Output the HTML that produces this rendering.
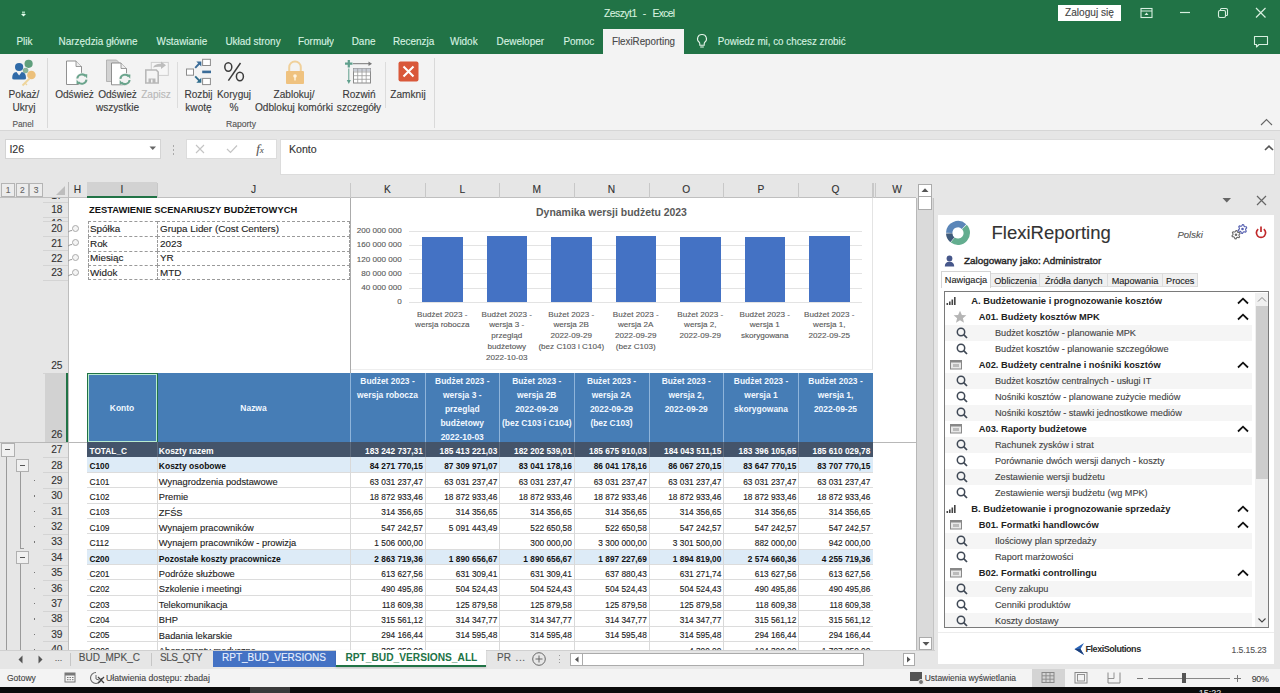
<!DOCTYPE html>
<html><head><meta charset="utf-8"><title>Excel</title>
<style>
html,body{margin:0;padding:0;}
body{width:1280px;height:693px;overflow:hidden;position:relative;background:#e6e6e6;font-family:"Liberation Sans",sans-serif;color:#222;}
div,svg{position:absolute;box-sizing:border-box;}
.t{white-space:pre;-webkit-text-stroke:0.12px currentColor;}
.b{-webkit-text-stroke:0;}
svg{overflow:visible;}
</style></head><body>

<div style="left:0px;top:0px;width:1280px;height:54px;background:#217346;"></div>
<svg style="left:20px;top:10px" width="8" height="8"><rect x="2" y="1.5" width="3" height="2" fill="#9fd3b3"/><path d="M1 4 L6 4 L3.5 6.5Z" fill="#e8fff0"/></svg>
<div class="t" style="left:603.9px;top:7.199999999999999px;height:14px;line-height:14px;font-size:10.3px;letter-spacing:-0.47px;color:#d6f0df;">Zeszyt1</div>
<div class="t" style="left:639.4px;top:7.199999999999999px;width:10px;height:14px;line-height:14px;text-align:center;font-size:10.3px;color:#d6f0df;">-</div>
<div class="t" style="left:652.5px;top:7.199999999999999px;height:14px;line-height:14px;font-size:10.3px;letter-spacing:-0.65px;color:#d6f0df;">Excel</div>
<div style="left:1058px;top:5px;width:63px;height:15.5px;background:#fff;"></div>
<div class="t" style="left:1054.5px;top:5.9px;width:70px;height:14px;line-height:14px;text-align:center;font-size:10.1px;color:#444;transform:scaleY(1.12);">Zaloguj się</div>
<svg style="left:1140px;top:7px" width="14" height="12"><rect x="1" y="1.5" width="11" height="9" fill="none" stroke="#d8efe0" stroke-width="1.1"/><line x1="1" y1="4" x2="12" y2="4" stroke="#d8efe0" stroke-width="1"/><path d="M6.5 5.5 L4.5 8 L8.5 8Z" fill="#d8efe0"/></svg>
<svg style="left:1179px;top:7px" width="14" height="12"><line x1="1" y1="5.5" x2="11" y2="5.5" stroke="#d8efe0" stroke-width="1.2"/></svg>
<svg style="left:1217px;top:7px" width="14" height="12"><rect x="1.5" y="3.5" width="7" height="7" rx="1.5" fill="none" stroke="#d8efe0" stroke-width="1.1"/><path d="M3.5 3.5 V2.5 Q3.5 1.5 4.5 1.5 H9 Q10.5 1.5 10.5 3 V7.5 Q10.5 8.5 9.5 8.5 H8.5" fill="none" stroke="#d8efe0" stroke-width="1.1"/></svg>
<svg style="left:1255px;top:7px" width="14" height="12"><path d="M1 1 L10.5 10.5 M10.5 1 L1 10.5" stroke="#d8efe0" stroke-width="1.2"/></svg>
<div class="t" style="left:16.4px;top:34.7px;height:14px;line-height:14px;font-size:9.95px;color:#d8f2e1;transform:scaleY(1.14);">Plik</div>
<div class="t" style="left:58.6px;top:34.7px;height:14px;line-height:14px;font-size:9.95px;color:#d8f2e1;transform:scaleY(1.14);">Narzędzia główne</div>
<div class="t" style="left:156.5px;top:34.7px;height:14px;line-height:14px;font-size:9.95px;color:#d8f2e1;transform:scaleY(1.14);">Wstawianie</div>
<div class="t" style="left:225.4px;top:34.7px;height:14px;line-height:14px;font-size:9.95px;color:#d8f2e1;transform:scaleY(1.14);">Układ strony</div>
<div class="t" style="left:298px;top:34.7px;height:14px;line-height:14px;font-size:9.95px;color:#d8f2e1;transform:scaleY(1.14);">Formuły</div>
<div class="t" style="left:351.7px;top:34.7px;height:14px;line-height:14px;font-size:9.95px;color:#d8f2e1;transform:scaleY(1.14);">Dane</div>
<div class="t" style="left:392.9px;top:34.7px;height:14px;line-height:14px;font-size:9.95px;color:#d8f2e1;transform:scaleY(1.14);">Recenzja</div>
<div class="t" style="left:450px;top:34.7px;height:14px;line-height:14px;font-size:9.95px;color:#d8f2e1;transform:scaleY(1.14);">Widok</div>
<div class="t" style="left:496.5px;top:34.7px;height:14px;line-height:14px;font-size:9.95px;color:#d8f2e1;transform:scaleY(1.14);">Deweloper</div>
<div class="t" style="left:563.4px;top:34.7px;height:14px;line-height:14px;font-size:9.95px;color:#d8f2e1;transform:scaleY(1.14);">Pomoc</div>
<div style="left:603px;top:28.5px;width:81px;height:25.5px;background:#f3f3f3;"></div>
<div class="t" style="left:598.5px;top:34.9px;width:90px;height:14px;line-height:14px;text-align:center;font-size:9.8px;color:#4a4a4a;transform:scaleY(1.14);">FlexiReporting</div>
<svg style="left:695px;top:33px" width="14" height="16"><path d="M7 1.5 A4.3 4.3 0 0 0 4.2 9.2 Q4.8 9.9 4.8 11 L4.8 12.3 L9.2 12.3 L9.2 11 Q9.2 9.9 9.8 9.2 A4.3 4.3 0 0 0 7 1.5Z" fill="none" stroke="#e6f4ea" stroke-width="1.1"/><line x1="5.2" y1="14" x2="8.8" y2="14" stroke="#e6f4ea" stroke-width="1.1"/></svg>
<div class="t" style="left:717.7px;top:34.7px;height:14px;line-height:14px;font-size:9.8px;color:#d8f2e1;transform:scaleY(1.14);">Powiedz mi, co chcesz zrobić</div>
<svg style="left:1252px;top:34px" width="18" height="15"><path d="M2.5 2.5 H15.5 V10.5 H7 L4.5 13 V10.5 H2.5 Z" fill="none" stroke="#d8efe0" stroke-width="1.1" stroke-linejoin="round"/></svg>
<div style="left:0px;top:54px;width:1280px;height:76.5px;background:#f3f3f3;border-bottom:1px solid #d6d6d6;"></div>
<div style="left:47px;top:58px;width:1px;height:70px;background:#d9d9d9;"></div>
<div style="left:434px;top:58px;width:1px;height:70px;background:#d9d9d9;"></div>
<div style="left:177px;top:62px;width:1px;height:46px;background:#dcdcdc;"></div>
<div style="left:385px;top:62px;width:1px;height:46px;background:#dcdcdc;"></div>
<div class="t" style="left:-36.0px;top:87.7px;width:120px;height:14px;line-height:14px;text-align:center;font-size:10.1px;color:#3a3a3a;transform:scaleY(1.12);">Pokaż/</div>
<div class="t" style="left:-36.0px;top:101.0px;width:120px;height:14px;line-height:14px;text-align:center;font-size:10.1px;color:#3a3a3a;transform:scaleY(1.12);">Ukryj</div>
<div class="t" style="left:14.5px;top:87.7px;width:120px;height:14px;line-height:14px;text-align:center;font-size:10.1px;color:#3a3a3a;transform:scaleY(1.12);">Odśwież</div>
<div class="t" style="left:57.5px;top:87.7px;width:120px;height:14px;line-height:14px;text-align:center;font-size:10.1px;color:#3a3a3a;transform:scaleY(1.12);">Odśwież</div>
<div class="t" style="left:57.5px;top:101.0px;width:120px;height:14px;line-height:14px;text-align:center;font-size:10.1px;color:#3a3a3a;transform:scaleY(1.12);">wszystkie</div>
<div class="t" style="left:96.0px;top:87.7px;width:120px;height:14px;line-height:14px;text-align:center;font-size:10.1px;color:#b8b8b8;transform:scaleY(1.12);">Zapisz</div>
<div class="t" style="left:138.5px;top:87.7px;width:120px;height:14px;line-height:14px;text-align:center;font-size:10.1px;color:#3a3a3a;transform:scaleY(1.12);">Rozbij</div>
<div class="t" style="left:138.5px;top:101.0px;width:120px;height:14px;line-height:14px;text-align:center;font-size:10.1px;color:#3a3a3a;transform:scaleY(1.12);">kwotę</div>
<div class="t" style="left:174.0px;top:87.7px;width:120px;height:14px;line-height:14px;text-align:center;font-size:10.1px;color:#3a3a3a;transform:scaleY(1.12);">Koryguj</div>
<div class="t" style="left:174.0px;top:101.0px;width:120px;height:14px;line-height:14px;text-align:center;font-size:10.1px;color:#3a3a3a;transform:scaleY(1.12);">%</div>
<div class="t" style="left:234.0px;top:87.7px;width:120px;height:14px;line-height:14px;text-align:center;font-size:10.1px;color:#3a3a3a;transform:scaleY(1.12);">Zablokuj/</div>
<div class="t" style="left:234.0px;top:101.0px;width:120px;height:14px;line-height:14px;text-align:center;font-size:10.1px;color:#3a3a3a;transform:scaleY(1.12);">Odblokuj komórki</div>
<div class="t" style="left:299.0px;top:87.7px;width:120px;height:14px;line-height:14px;text-align:center;font-size:10.1px;color:#3a3a3a;transform:scaleY(1.12);">Rozwiń</div>
<div class="t" style="left:299.0px;top:101.0px;width:120px;height:14px;line-height:14px;text-align:center;font-size:10.1px;color:#3a3a3a;transform:scaleY(1.12);">szczegóły</div>
<div class="t" style="left:348.0px;top:87.7px;width:120px;height:14px;line-height:14px;text-align:center;font-size:10.1px;color:#3a3a3a;transform:scaleY(1.12);">Zamknij</div>
<div class="t" style="left:-7.0px;top:116.6px;width:60px;height:14px;line-height:14px;text-align:center;font-size:8.3px;color:#555;">Panel</div>
<div class="t" style="left:211.0px;top:116.6px;width:60px;height:14px;line-height:14px;text-align:center;font-size:8.6px;color:#555;">Raporty</div>
<svg style="left:1260px;top:118px" width="14" height="9"><path d="M1 7 L6.5 1.5 L12 7" fill="none" stroke="#666" stroke-width="1.1"/></svg>
<svg style="left:8px;top:58px" width="32" height="30">
<circle cx="20.6" cy="5.8" r="4.1" fill="#5f9f7c"/>
<circle cx="17.6" cy="12.5" r="2.8" fill="#8bb59a"/>
<circle cx="11.1" cy="9" r="4.1" fill="#2f6aa8"/>
<path d="M4.2 20.2 Q4 14.5 8.5 14 L11.1 17.5 L13.7 14 Q18.2 14.5 18 20.2 Q18 21.5 16 21.5 H6.2 Q4.2 21.5 4.2 20.2Z" fill="#2f6aa8"/>
<circle cx="23.4" cy="17" r="4.3" fill="#ecc07a"/>
<path d="M21.5 20.5 L14.5 27.5" stroke="#eed49a" stroke-width="1.8"/>
<path d="M17 25 L19 27" stroke="#eed49a" stroke-width="1.3"/>
</svg>
<svg style="left:64px;top:58px" width="28" height="30"><path d="M2.5 3 H12 L17.5 8.5 V26.5 H2.5 Z" fill="#fff" stroke="#858585" stroke-width="0.9"/><path d="M12 3 V8.5 H17.5" fill="#ececec" stroke="#858585" stroke-width="0.8"/><circle cx="17.9" cy="21.1" r="6.3" fill="#f3f3f3"/><path d="M13.299999999999999 20.5 A4.6 4.6 0 0 1 21.5 18.200000000000003" fill="none" stroke="#6aa48c" stroke-width="2"/><path d="M19.5 16.200000000000003 L23.299999999999997 16.200000000000003 L23.099999999999998 20.5Z" fill="#6aa48c"/><path d="M22.5 21.700000000000003 A4.6 4.6 0 0 1 14.299999999999999 24.0" fill="none" stroke="#6aa48c" stroke-width="2"/><path d="M16.299999999999997 26.0 L12.499999999999998 26.0 L12.7 21.700000000000003Z" fill="#6aa48c"/></svg>
<svg style="left:104px;top:58px" width="28" height="30"><path d="M2.5 2 H12.5 L16 5.5 V23.5 H2.5 Z" fill="#d2d2d2" stroke="#a8a8a8" stroke-width="0.8"/><path d="M7.5 5 H17 L22.5 10.5 V26.8 H7.5 Z" fill="#fff" stroke="#858585" stroke-width="0.9"/><path d="M17 5 V10.5 H22.5" fill="#ececec" stroke="#858585" stroke-width="0.8"/><circle cx="21" cy="21.4" r="6.3" fill="#f3f3f3"/><path d="M16.4 20.799999999999997 A4.6 4.6 0 0 1 24.6 18.5" fill="none" stroke="#6aa48c" stroke-width="2"/><path d="M22.6 16.5 L26.4 16.5 L26.2 20.799999999999997Z" fill="#6aa48c"/><path d="M25.6 22.0 A4.6 4.6 0 0 1 17.4 24.299999999999997" fill="none" stroke="#6aa48c" stroke-width="2"/><path d="M19.4 26.299999999999997 L15.6 26.299999999999997 L15.8 22.0Z" fill="#6aa48c"/></svg>
<svg style="left:144px;top:58px" width="28" height="28">
<rect x="7.3" y="4.4" width="17" height="13" fill="#f6f6f6" stroke="#cfcfcf" stroke-width="1"/>
<path d="M9 9.5 Q11 5.5 17 5.8 L17 3.5 L22 7.3 L17 11 L17 8.8 Q12 8.5 9 9.5Z" fill="#bdbdbd"/>
<path d="M1.8 12 H12.3 L14.2 14 V25 H1.8 Z" fill="#f4f4f4" stroke="#b8b8b8" stroke-width="1.6"/>
<rect x="4.5" y="20.5" width="7" height="4.5" fill="#b8b8b8"/>
<rect x="7" y="21.5" width="1.5" height="3" fill="#f4f4f4"/>
</svg>
<svg style="left:185px;top:58px" width="28" height="28">
<rect x="1.5" y="11" width="7" height="6.2" fill="#fff" stroke="#8c8c8c" stroke-width="1"/>
<rect x="17.6" y="1.3" width="7.8" height="6.2" fill="#fff" stroke="#8c8c8c" stroke-width="1"/>
<rect x="17.6" y="20.4" width="7.8" height="6.2" fill="#fff" stroke="#8c8c8c" stroke-width="1"/>
<rect x="17.2" y="12.6" width="8.8" height="2.6" fill="#3b6c98"/>
<path d="M10.2 9.8 L14.8 5" stroke="#3b6c98" stroke-width="1.9"/><path d="M11.3 3.4 L16.3 3.4 L16.3 8.4Z" fill="#3b6c98"/>
<path d="M10.2 18.4 L14.8 23.2" stroke="#2f6c8c" stroke-width="1.9"/><path d="M11.3 24.8 L16.3 24.8 L16.3 19.8Z" fill="#2f6c8c"/>
</svg>
<svg style="left:220px;top:58px" width="30" height="28"><ellipse cx="8.3" cy="9" rx="3.5" ry="4.2" fill="none" stroke="#3c3c3c" stroke-width="1.5"/><ellipse cx="19.9" cy="18.5" rx="3.5" ry="4.2" fill="none" stroke="#3c3c3c" stroke-width="1.5"/><path d="M20.5 5 L8.4 22.7" stroke="#3c3c3c" stroke-width="1.5"/></svg>
<svg style="left:284px;top:60px" width="22" height="25">
<path d="M5.2 11 V7.2 A5.8 5.8 0 0 1 16.8 7.2 V11" fill="none" stroke="#f0d09a" stroke-width="2"/>
<rect x="2" y="11" width="18" height="13" rx="1" fill="#efc27f"/>
<circle cx="11" cy="16" r="1.8" fill="#fff4e0"/><rect x="10.3" y="16" width="1.4" height="4.5" fill="#fff4e0"/>
</svg>
<svg style="left:345px;top:59px" width="28" height="26">
<path d="M3.8 1 V8.5 M0 4.7 H7.5" stroke="#5f9f8c" stroke-width="2.2"/>
<path d="M8 4.7 H24" stroke="#777" stroke-width="1"/><path d="M23.5 2.5 L27 4.7 L23.5 6.9Z" fill="#777"/>
<path d="M3.8 9.5 V23" stroke="#5f9f8c" stroke-width="1"/><path d="M1.8 21 L3.8 25 L5.8 21Z" fill="#5f9f8c"/>
<rect x="8.5" y="9.5" width="17" height="14.5" fill="#fff" stroke="#8a8a8a" stroke-width="1"/>
<rect x="8.5" y="9.5" width="17" height="3" fill="#c9cdd6"/>
<path d="M8.5 13 H25.5 M8.5 16.7 H25.5 M8.5 20.3 H25.5 M12.7 9.5 V24 M17 9.5 V24 M21.2 9.5 V24" stroke="#9a9a9a" stroke-width="0.8"/>
</svg>
<svg style="left:398px;top:61px" width="22" height="21">
<rect x="0.5" y="0.5" width="20" height="20" rx="2" fill="#d9583a"/>
<path d="M5.5 5.5 L15.5 15.5 M15.5 5.5 L5.5 15.5" stroke="#fff" stroke-width="2.1"/>
</svg>
<div style="left:4.5px;top:139px;width:156.5px;height:19.5px;background:#fff;border:1px solid #d4d4d4;"></div>
<div class="t" style="left:9.4px;top:141.8px;height:14px;line-height:14px;font-size:10.6px;color:#333;">I26</div>
<svg style="left:149px;top:146px" width="8" height="5"><path d="M0.5 0.5 L7 0.5 L3.75 4Z" fill="#666"/></svg>
<div style="left:172.8px;top:145px;width:1.5px;height:1.5px;background:#aaa;"></div>
<div style="left:172.8px;top:149px;width:1.5px;height:1.5px;background:#aaa;"></div>
<div style="left:172.8px;top:153px;width:1.5px;height:1.5px;background:#aaa;"></div>
<div style="left:186px;top:139px;width:91px;height:19.5px;background:#fff;border:1px solid #dcdcdc;"></div>
<svg style="left:195px;top:144px" width="10" height="10"><path d="M1 1 L9 9 M9 1 L1 9" stroke="#c4c4c4" stroke-width="1.1"/></svg>
<svg style="left:226px;top:144px" width="12" height="10"><path d="M1 5 L4.5 8.5 L11 1.5" fill="none" stroke="#c4c4c4" stroke-width="1.2"/></svg>
<div class="t" style="left:245.0px;top:141.5px;width:30px;height:14px;line-height:14px;text-align:center;font-family:'Liberation Serif',serif;font-style:italic;font-size:13px;color:#555;">f<span style="font-size:9px">x</span></div>
<div style="left:279.5px;top:139px;width:995.5px;height:35.5px;background:#fff;border:1px solid #dcdcdc;"></div>
<div class="t" style="left:289px;top:142.0px;height:14px;line-height:14px;font-size:10.6px;color:#333;">Konto</div>
<svg style="left:1264px;top:145px" width="10" height="6"><path d="M1 5 L5 1.2 L9 5" fill="none" stroke="#555" stroke-width="1.6"/></svg>
<div style="left:68px;top:197.5px;width:848px;height:452.5px;background:#fff;"></div>
<div style="left:0px;top:182px;width:916px;height:15.5px;background:#e6e6e6;border-bottom:1px solid #bfbfbf;"></div>
<div style="left:1.3px;top:182.6px;width:13.5px;height:14px;background:#ececec;border:1px solid #b4b4b4;"></div>
<div class="t" style="left:1.0500000000000007px;top:182.8px;width:14px;height:14px;line-height:14px;text-align:center;font-size:8.5px;color:#666;">1</div>
<div style="left:15.6px;top:182.6px;width:13.5px;height:14px;background:#ececec;border:1px solid #b4b4b4;"></div>
<div class="t" style="left:15.350000000000001px;top:182.8px;width:14px;height:14px;line-height:14px;text-align:center;font-size:8.5px;color:#666;">2</div>
<div style="left:29.4px;top:182.6px;width:13.5px;height:14px;background:#ececec;border:1px solid #b4b4b4;"></div>
<div class="t" style="left:29.15px;top:182.8px;width:14px;height:14px;line-height:14px;text-align:center;font-size:8.5px;color:#666;">3</div>
<svg style="left:55px;top:185px" width="11" height="11"><path d="M10 1 L10 10 L1 10Z" fill="#bdbdbd"/></svg>
<div style="left:67.5px;top:182px;width:1px;height:468px;background:#bdbdbd;"></div>
<div style="left:86.5px;top:183px;width:1px;height:14.5px;background:#c8c8c8;"></div>
<div class="t" style="left:47.5px;top:183.0px;width:60px;height:14px;line-height:14px;text-align:center;font-size:10.2px;color:#333;">H</div>
<div style="left:87px;top:182px;width:70px;height:15.5px;background:#d2d2d2;border-bottom:2px solid #217346;"></div>
<div style="left:156.5px;top:183px;width:1px;height:14.5px;background:#c8c8c8;"></div>
<div class="t" style="left:92.0px;top:183.0px;width:60px;height:14px;line-height:14px;text-align:center;font-size:10.2px;color:#333;">I</div>
<div style="left:349.5px;top:183px;width:1px;height:14.5px;background:#c8c8c8;"></div>
<div class="t" style="left:223.5px;top:183.0px;width:60px;height:14px;line-height:14px;text-align:center;font-size:10.2px;color:#333;">J</div>
<div style="left:424.5px;top:183px;width:1px;height:14.5px;background:#c8c8c8;"></div>
<div class="t" style="left:357.5px;top:183.0px;width:60px;height:14px;line-height:14px;text-align:center;font-size:10.2px;color:#333;">K</div>
<div style="left:499.0px;top:183px;width:1px;height:14.5px;background:#c8c8c8;"></div>
<div class="t" style="left:432.25px;top:183.0px;width:60px;height:14px;line-height:14px;text-align:center;font-size:10.2px;color:#333;">L</div>
<div style="left:573.5px;top:183px;width:1px;height:14.5px;background:#c8c8c8;"></div>
<div class="t" style="left:506.75px;top:183.0px;width:60px;height:14px;line-height:14px;text-align:center;font-size:10.2px;color:#333;">M</div>
<div style="left:648.5px;top:183px;width:1px;height:14.5px;background:#c8c8c8;"></div>
<div class="t" style="left:581.5px;top:183.0px;width:60px;height:14px;line-height:14px;text-align:center;font-size:10.2px;color:#333;">N</div>
<div style="left:723.0px;top:183px;width:1px;height:14.5px;background:#c8c8c8;"></div>
<div class="t" style="left:656.25px;top:183.0px;width:60px;height:14px;line-height:14px;text-align:center;font-size:10.2px;color:#333;">O</div>
<div style="left:798.0px;top:183px;width:1px;height:14.5px;background:#c8c8c8;"></div>
<div class="t" style="left:731.0px;top:183.0px;width:60px;height:14px;line-height:14px;text-align:center;font-size:10.2px;color:#333;">P</div>
<div style="left:872.0px;top:183px;width:1px;height:14.5px;background:#c8c8c8;"></div>
<div class="t" style="left:805.5px;top:183.0px;width:60px;height:14px;line-height:14px;text-align:center;font-size:10.2px;color:#333;">Q</div>
<div style="left:915.5px;top:183px;width:1px;height:14.5px;background:#c8c8c8;"></div>
<div class="t" style="left:867.0px;top:183.0px;width:60px;height:14px;line-height:14px;text-align:center;font-size:10.2px;color:#333;">W</div>
<div style="left:872.5px;top:183px;width:1px;height:14.5px;background:#c8c8c8;"></div>
<div style="left:874.5px;top:183px;width:1px;height:14.5px;background:#c8c8c8;"></div>
<div style="left:43px;top:202.0px;width:24.5px;height:1px;background:#d4d4d4;"></div>
<div style="left:43px;top:197.5px;width:24px;height:4.5px;overflow:hidden;"><div class="t" style="left:0;top:-8.3px;width:19.5px;height:14px;line-height:14px;text-align:right;font-size:10.2px;color:#333;">17</div></div>
<div style="left:43px;top:216.5px;width:24.5px;height:1px;background:#d4d4d4;"></div>
<div class="t" style="left:32.5px;top:203.25px;width:30px;height:14px;line-height:14px;text-align:right;font-size:10.2px;color:#333;">18</div>
<div style="left:43px;top:220.5px;width:24.5px;height:1px;background:#d4d4d4;"></div>
<div style="left:43px;top:217px;width:24px;height:3.5px;overflow:hidden;"><div class="t" style="left:0;top:0.3px;width:19.5px;height:14px;line-height:14px;text-align:right;font-size:10.2px;color:#333;">19</div></div>
<div style="left:43px;top:235.5px;width:24.5px;height:1px;background:#d4d4d4;"></div>
<div class="t" style="left:32.5px;top:222.0px;width:30px;height:14px;line-height:14px;text-align:right;font-size:10.2px;color:#333;">20</div>
<div style="left:43px;top:250.3px;width:24.5px;height:1px;background:#d4d4d4;"></div>
<div class="t" style="left:32.5px;top:236.9px;width:30px;height:14px;line-height:14px;text-align:right;font-size:10.2px;color:#333;">21</div>
<div style="left:43px;top:264.9px;width:24.5px;height:1px;background:#d4d4d4;"></div>
<div class="t" style="left:32.5px;top:251.60000000000002px;width:30px;height:14px;line-height:14px;text-align:right;font-size:10.2px;color:#333;">22</div>
<div style="left:43px;top:279.5px;width:24.5px;height:1px;background:#d4d4d4;"></div>
<div class="t" style="left:32.5px;top:266.2px;width:30px;height:14px;line-height:14px;text-align:right;font-size:10.2px;color:#333;">23</div>
<div style="left:43px;top:372.5px;width:24.5px;height:1px;background:#d4d4d4;"></div>
<div class="t" style="left:32.5px;top:359.0px;width:30px;height:14px;line-height:14px;text-align:right;font-size:10.2px;color:#333;">25</div>
<div style="left:45px;top:373px;width:22.5px;height:69px;background:#d2d2d2;border-right:2px solid #217346;"></div>
<div style="left:43px;top:441.5px;width:24.5px;height:1px;background:#d4d4d4;"></div>
<div class="t" style="left:32.5px;top:428.0px;width:30px;height:14px;line-height:14px;text-align:right;font-size:10.2px;color:#333;">26</div>
<div style="left:43px;top:456.875px;width:24.5px;height:1px;background:#d4d4d4;"></div>
<div class="t" style="left:32.5px;top:443.1875px;width:30px;height:14px;line-height:14px;text-align:right;font-size:10.2px;color:#333;">27</div>
<div style="left:43px;top:472.25px;width:24.5px;height:1px;background:#d4d4d4;"></div>
<div class="t" style="left:32.5px;top:458.5625px;width:30px;height:14px;line-height:14px;text-align:right;font-size:10.2px;color:#333;">28</div>
<div style="left:43px;top:487.625px;width:24.5px;height:1px;background:#d4d4d4;"></div>
<div class="t" style="left:32.5px;top:473.9375px;width:30px;height:14px;line-height:14px;text-align:right;font-size:10.2px;color:#333;">29</div>
<div style="left:43px;top:503.0px;width:24.5px;height:1px;background:#d4d4d4;"></div>
<div class="t" style="left:32.5px;top:489.3125px;width:30px;height:14px;line-height:14px;text-align:right;font-size:10.2px;color:#333;">30</div>
<div style="left:43px;top:518.375px;width:24.5px;height:1px;background:#d4d4d4;"></div>
<div class="t" style="left:32.5px;top:504.6875px;width:30px;height:14px;line-height:14px;text-align:right;font-size:10.2px;color:#333;">31</div>
<div style="left:43px;top:533.75px;width:24.5px;height:1px;background:#d4d4d4;"></div>
<div class="t" style="left:32.5px;top:520.0625px;width:30px;height:14px;line-height:14px;text-align:right;font-size:10.2px;color:#333;">32</div>
<div style="left:43px;top:549.125px;width:24.5px;height:1px;background:#d4d4d4;"></div>
<div class="t" style="left:32.5px;top:535.4375px;width:30px;height:14px;line-height:14px;text-align:right;font-size:10.2px;color:#333;">33</div>
<div style="left:43px;top:564.5px;width:24.5px;height:1px;background:#d4d4d4;"></div>
<div class="t" style="left:32.5px;top:550.8125px;width:30px;height:14px;line-height:14px;text-align:right;font-size:10.2px;color:#333;">34</div>
<div style="left:43px;top:579.875px;width:24.5px;height:1px;background:#d4d4d4;"></div>
<div class="t" style="left:32.5px;top:566.1875px;width:30px;height:14px;line-height:14px;text-align:right;font-size:10.2px;color:#333;">35</div>
<div style="left:43px;top:595.25px;width:24.5px;height:1px;background:#d4d4d4;"></div>
<div class="t" style="left:32.5px;top:581.5625px;width:30px;height:14px;line-height:14px;text-align:right;font-size:10.2px;color:#333;">36</div>
<div style="left:43px;top:610.625px;width:24.5px;height:1px;background:#d4d4d4;"></div>
<div class="t" style="left:32.5px;top:596.9375px;width:30px;height:14px;line-height:14px;text-align:right;font-size:10.2px;color:#333;">37</div>
<div style="left:43px;top:626.0px;width:24.5px;height:1px;background:#d4d4d4;"></div>
<div class="t" style="left:32.5px;top:612.3125px;width:30px;height:14px;line-height:14px;text-align:right;font-size:10.2px;color:#333;">38</div>
<div style="left:43px;top:641.375px;width:24.5px;height:1px;background:#d4d4d4;"></div>
<div class="t" style="left:32.5px;top:627.6875px;width:30px;height:14px;line-height:14px;text-align:right;font-size:10.2px;color:#333;">39</div>
<div style="left:43px;top:656.75px;width:24.5px;height:1px;background:#d4d4d4;"></div>
<div class="t" style="left:32.5px;top:643.0625px;width:30px;height:14px;line-height:14px;text-align:right;font-size:10.2px;color:#333;">40</div>
<div style="left:0px;top:441.5px;width:916px;height:1px;background:#b8b8b8;"></div>
<div style="left:1px;top:443.1875px;width:13.5px;height:13.5px;background:#f0f0f0;border:1px solid #b0b0b0;"></div>
<div style="left:4.8px;top:449.1875px;width:5.5px;height:1px;background:#555;"></div>
<div style="left:6.1px;top:456.6875px;width:1px;height:193.3125px;background:#9a9a9a;"></div>
<div style="left:15.7px;top:458.5625px;width:13.5px;height:13.5px;background:#f0f0f0;border:1px solid #b0b0b0;"></div>
<div style="left:19.5px;top:464.5625px;width:5.5px;height:1px;background:#555;"></div>
<div style="left:20.3px;top:472.0625px;width:1px;height:75.875px;background:#9a9a9a;"></div>
<div style="left:20.3px;top:547.9375px;width:4px;height:1px;background:#9a9a9a;"></div>
<div style="left:15.7px;top:550.8125px;width:13.5px;height:13.5px;background:#f0f0f0;border:1px solid #b0b0b0;"></div>
<div style="left:19.5px;top:556.8125px;width:5.5px;height:1px;background:#555;"></div>
<div style="left:20.3px;top:564.3125px;width:1px;height:85.6875px;background:#9a9a9a;"></div>
<div style="left:34px;top:479.9375px;width:1.3px;height:1.3px;background:#777;"></div>
<div style="left:34px;top:495.3125px;width:1.3px;height:1.3px;background:#777;"></div>
<div style="left:34px;top:510.6875px;width:1.3px;height:1.3px;background:#777;"></div>
<div style="left:34px;top:526.0625px;width:1.3px;height:1.3px;background:#777;"></div>
<div style="left:34px;top:541.4375px;width:1.3px;height:1.3px;background:#777;"></div>
<div style="left:34px;top:572.1875px;width:1.3px;height:1.3px;background:#777;"></div>
<div style="left:34px;top:587.5625px;width:1.3px;height:1.3px;background:#777;"></div>
<div style="left:34px;top:602.9375px;width:1.3px;height:1.3px;background:#777;"></div>
<div style="left:34px;top:618.3125px;width:1.3px;height:1.3px;background:#777;"></div>
<div style="left:34px;top:633.6875px;width:1.3px;height:1.3px;background:#777;"></div>
<div style="left:34px;top:649.0625px;width:1.3px;height:1.3px;background:#777;"></div>
<svg style="left:67px;top:222.5px" width="14" height="12"><path d="M1 9 Q3 7.5 5 7.5" fill="none" stroke="#999" stroke-width="1"/><circle cx="8.5" cy="5.5" r="3" fill="#f4f4f4" stroke="#aaa" stroke-width="1"/></svg>
<svg style="left:67px;top:237.4px" width="14" height="12"><path d="M1 9 Q3 7.5 5 7.5" fill="none" stroke="#999" stroke-width="1"/><circle cx="8.5" cy="5.5" r="3" fill="#f4f4f4" stroke="#aaa" stroke-width="1"/></svg>
<svg style="left:67px;top:252.10000000000002px" width="14" height="12"><path d="M1 9 Q3 7.5 5 7.5" fill="none" stroke="#999" stroke-width="1"/><circle cx="8.5" cy="5.5" r="3" fill="#f4f4f4" stroke="#aaa" stroke-width="1"/></svg>
<svg style="left:67px;top:266.7px" width="14" height="12"><path d="M1 9 Q3 7.5 5 7.5" fill="none" stroke="#999" stroke-width="1"/><circle cx="8.5" cy="5.5" r="3" fill="#f4f4f4" stroke="#aaa" stroke-width="1"/></svg>
<div class="t" style="left:89px;top:203.25px;height:14px;line-height:14px;font-size:9.36px;font-weight:bold;color:#111;-webkit-text-stroke:0;">ZESTAWIENIE SCENARIUSZY BUDŻETOWYCH</div>
<div style="left:87.5px;top:221px;width:70px;height:15.5px;border-top:1px dashed #9a9a9a;border-left:1px dashed #9a9a9a;"></div>
<div style="left:157px;top:221px;width:193px;height:15.5px;border-top:1px dashed #9a9a9a;border-left:1px dashed #9a9a9a;border-right:1px dashed #9a9a9a;"></div>
<div class="t" style="left:90px;top:221.8px;height:14px;line-height:14px;font-size:9.9px;color:#222;">Spółka</div>
<div class="t" style="left:160px;top:221.8px;height:14px;line-height:14px;font-size:9.9px;color:#222;">Grupa Lider (Cost Centers)</div>
<div style="left:87.5px;top:236px;width:70px;height:15.300000000000011px;border-top:1px dashed #9a9a9a;border-left:1px dashed #9a9a9a;"></div>
<div style="left:157px;top:236px;width:193px;height:15.300000000000011px;border-top:1px dashed #9a9a9a;border-left:1px dashed #9a9a9a;border-right:1px dashed #9a9a9a;"></div>
<div class="t" style="left:90px;top:236.70000000000002px;height:14px;line-height:14px;font-size:9.9px;color:#222;">Rok</div>
<div class="t" style="left:160px;top:236.70000000000002px;height:14px;line-height:14px;font-size:9.9px;color:#222;">2023</div>
<div style="left:87.5px;top:250.8px;width:70px;height:15.099999999999966px;border-top:1px dashed #9a9a9a;border-left:1px dashed #9a9a9a;"></div>
<div style="left:157px;top:250.8px;width:193px;height:15.099999999999966px;border-top:1px dashed #9a9a9a;border-left:1px dashed #9a9a9a;border-right:1px dashed #9a9a9a;"></div>
<div class="t" style="left:90px;top:251.40000000000003px;height:14px;line-height:14px;font-size:9.9px;color:#222;">Miesiąc</div>
<div class="t" style="left:160px;top:251.40000000000003px;height:14px;line-height:14px;font-size:9.9px;color:#222;">YR</div>
<div style="left:87.5px;top:265.4px;width:70px;height:15.100000000000023px;border-top:1px dashed #9a9a9a;border-left:1px dashed #9a9a9a;border-bottom:1px dashed #9a9a9a;"></div>
<div style="left:157px;top:265.4px;width:193px;height:15.100000000000023px;border-top:1px dashed #9a9a9a;border-left:1px dashed #9a9a9a;border-right:1px dashed #9a9a9a;border-bottom:1px dashed #9a9a9a;"></div>
<div class="t" style="left:90px;top:266.0px;height:14px;line-height:14px;font-size:9.9px;color:#222;">Widok</div>
<div class="t" style="left:160px;top:266.0px;height:14px;line-height:14px;font-size:9.9px;color:#222;">MTD</div>
<div style="left:350px;top:197.5px;width:523px;height:172px;background:#fff;border-left:1px solid #d9d9d9;border-right:1px solid #e4e4e4;border-bottom:1px solid #eeeeee;"></div>
<div style="left:349.6px;top:197.5px;width:1px;height:175.5px;background:#ababab;"></div>
<div class="t" style="left:481.5px;top:206.0px;width:260px;height:14px;line-height:14px;text-align:center;font-size:10.45px;font-weight:bold;color:#595959;-webkit-text-stroke:0;">Dynamika wersji budżetu 2023</div>
<div style="left:408.5px;top:230.6px;width:453px;height:1px;background:#e3e3e3;"></div>
<div class="t" style="left:341.8px;top:226.1px;width:60px;height:10px;line-height:10px;text-align:right;font-size:8.1px;color:#595959;">200 000 000</div>
<div style="left:408.5px;top:244.84px;width:453px;height:1px;background:#e3e3e3;"></div>
<div class="t" style="left:341.8px;top:240.34px;width:60px;height:10px;line-height:10px;text-align:right;font-size:8.1px;color:#595959;">160 000 000</div>
<div style="left:408.5px;top:259.08px;width:453px;height:1px;background:#e3e3e3;"></div>
<div class="t" style="left:341.8px;top:254.57999999999998px;width:60px;height:10px;line-height:10px;text-align:right;font-size:8.1px;color:#595959;">120 000 000</div>
<div style="left:408.5px;top:273.32px;width:453px;height:1px;background:#e3e3e3;"></div>
<div class="t" style="left:341.8px;top:268.82px;width:60px;height:10px;line-height:10px;text-align:right;font-size:8.1px;color:#595959;">80 000 000</div>
<div style="left:408.5px;top:287.56px;width:453px;height:1px;background:#e3e3e3;"></div>
<div class="t" style="left:341.8px;top:283.06px;width:60px;height:10px;line-height:10px;text-align:right;font-size:8.1px;color:#595959;">40 000 000</div>
<div style="left:408.5px;top:301.8px;width:453px;height:1px;background:#e3e3e3;"></div>
<div class="t" style="left:341.8px;top:297.3px;width:60px;height:10px;line-height:10px;text-align:right;font-size:8.1px;color:#595959;">0</div>
<div style="left:422.0px;top:237.06558551764px;width:40.5px;height:65.23441448236001px;background:#4472c4;"></div>
<div class="t" style="left:402.25px;top:309.5px;width:80px;height:10px;line-height:10px;text-align:center;font-size:8.1px;color:#595959;">Budżet 2023 -</div>
<div class="t" style="left:402.25px;top:320.4px;width:80px;height:10px;line-height:10px;text-align:center;font-size:8.1px;color:#595959;">wersja robocza</div>
<div style="left:486.5px;top:236.29289331332px;width:40.5px;height:66.00710668668px;background:#4472c4;"></div>
<div class="t" style="left:466.75px;top:309.5px;width:80px;height:10px;line-height:10px;text-align:center;font-size:8.1px;color:#595959;">Budżet 2023 -</div>
<div class="t" style="left:466.75px;top:320.4px;width:80px;height:10px;line-height:10px;text-align:center;font-size:8.1px;color:#595959;">wersja 3 -</div>
<div class="t" style="left:466.75px;top:331.3px;width:80px;height:10px;line-height:10px;text-align:center;font-size:8.1px;color:#595959;">przegląd</div>
<div class="t" style="left:466.75px;top:342.2px;width:80px;height:10px;line-height:10px;text-align:center;font-size:8.1px;color:#595959;">budżetowy</div>
<div class="t" style="left:466.75px;top:353.1px;width:80px;height:10px;line-height:10px;text-align:center;font-size:8.1px;color:#595959;">2022-10-03</div>
<div style="left:551.0px;top:237.43589611244002px;width:40.5px;height:64.86410388755999px;background:#4472c4;"></div>
<div class="t" style="left:531.25px;top:309.5px;width:80px;height:10px;line-height:10px;text-align:center;font-size:8.1px;color:#595959;">Bużet 2023 -</div>
<div class="t" style="left:531.25px;top:320.4px;width:80px;height:10px;line-height:10px;text-align:center;font-size:8.1px;color:#595959;">wersja 2B</div>
<div class="t" style="left:531.25px;top:331.3px;width:80px;height:10px;line-height:10px;text-align:center;font-size:8.1px;color:#595959;">2022-09-29</div>
<div class="t" style="left:531.25px;top:342.2px;width:80px;height:10px;line-height:10px;text-align:center;font-size:8.1px;color:#595959;">(bez C103 i C104)</div>
<div style="left:615.5px;top:236.19937602932px;width:40.5px;height:66.10062397068px;background:#4472c4;"></div>
<div class="t" style="left:595.75px;top:309.5px;width:80px;height:10px;line-height:10px;text-align:center;font-size:8.1px;color:#595959;">Bużet 2023 -</div>
<div class="t" style="left:595.75px;top:320.4px;width:80px;height:10px;line-height:10px;text-align:center;font-size:8.1px;color:#595959;">wersja 2A</div>
<div class="t" style="left:595.75px;top:331.3px;width:80px;height:10px;line-height:10px;text-align:center;font-size:8.1px;color:#595959;">2022-09-29</div>
<div class="t" style="left:595.75px;top:342.2px;width:80px;height:10px;line-height:10px;text-align:center;font-size:8.1px;color:#595959;">(bez C103)</div>
<div style="left:680.0px;top:236.7805100306px;width:40.5px;height:65.5194899694px;background:#4472c4;"></div>
<div class="t" style="left:660.25px;top:309.5px;width:80px;height:10px;line-height:10px;text-align:center;font-size:8.1px;color:#595959;">Bużet 2023 -</div>
<div class="t" style="left:660.25px;top:320.4px;width:80px;height:10px;line-height:10px;text-align:center;font-size:8.1px;color:#595959;">wersja 2,</div>
<div class="t" style="left:660.25px;top:331.3px;width:80px;height:10px;line-height:10px;text-align:center;font-size:8.1px;color:#595959;">2022-09-29</div>
<div style="left:744.5px;top:237.0109863886px;width:40.5px;height:65.28901361140001px;background:#4472c4;"></div>
<div class="t" style="left:724.75px;top:309.5px;width:80px;height:10px;line-height:10px;text-align:center;font-size:8.1px;color:#595959;">Budżet 2023 -</div>
<div class="t" style="left:724.75px;top:320.4px;width:80px;height:10px;line-height:10px;text-align:center;font-size:8.1px;color:#595959;">wersja 1</div>
<div class="t" style="left:724.75px;top:331.3px;width:80px;height:10px;line-height:10px;text-align:center;font-size:8.1px;color:#595959;">skorygowana</div>
<div style="left:809.0px;top:236.22282939832002px;width:40.5px;height:66.07717060168001px;background:#4472c4;"></div>
<div class="t" style="left:789.25px;top:309.5px;width:80px;height:10px;line-height:10px;text-align:center;font-size:8.1px;color:#595959;">Budżet 2023 -</div>
<div class="t" style="left:789.25px;top:320.4px;width:80px;height:10px;line-height:10px;text-align:center;font-size:8.1px;color:#595959;">wersja 1,</div>
<div class="t" style="left:789.25px;top:331.3px;width:80px;height:10px;line-height:10px;text-align:center;font-size:8.1px;color:#595959;">2022-09-25</div>
<div style="left:87px;top:373px;width:785.5px;height:69px;background:#467db6;"></div>
<div style="left:156.5px;top:373px;width:1px;height:69px;background:#8fb4da;"></div>
<div style="left:349.5px;top:373px;width:1px;height:69px;background:#8fb4da;"></div>
<div style="left:424.5px;top:373px;width:1px;height:69px;background:#8fb4da;"></div>
<div style="left:499.0px;top:373px;width:1px;height:69px;background:#8fb4da;"></div>
<div style="left:573.5px;top:373px;width:1px;height:69px;background:#8fb4da;"></div>
<div style="left:648.5px;top:373px;width:1px;height:69px;background:#8fb4da;"></div>
<div style="left:723.0px;top:373px;width:1px;height:69px;background:#8fb4da;"></div>
<div style="left:798.0px;top:373px;width:1px;height:69px;background:#8fb4da;"></div>
<div class="t" style="left:87.0px;top:400.5px;width:70px;height:14px;line-height:14px;text-align:center;font-size:8.45px;font-weight:bold;color:#f2f8ff;-webkit-text-stroke:0;">Konto</div>
<div class="t" style="left:158.5px;top:400.5px;width:190px;height:14px;line-height:14px;text-align:center;font-size:8.45px;font-weight:bold;color:#f2f8ff;-webkit-text-stroke:0;">Nazwa</div>
<div class="t" style="left:350.0px;top:374.3px;width:75px;height:14px;line-height:14px;text-align:center;font-size:8.45px;font-weight:bold;color:#f2f8ff;-webkit-text-stroke:0;">Budżet 2023 -</div>
<div class="t" style="left:350.0px;top:388.3px;width:75px;height:14px;line-height:14px;text-align:center;font-size:8.45px;font-weight:bold;color:#f2f8ff;-webkit-text-stroke:0;">wersja robocza</div>
<div class="t" style="left:425.0px;top:374.3px;width:74.5px;height:14px;line-height:14px;text-align:center;font-size:8.45px;font-weight:bold;color:#f2f8ff;-webkit-text-stroke:0;">Budżet 2023 -</div>
<div class="t" style="left:425.0px;top:388.3px;width:74.5px;height:14px;line-height:14px;text-align:center;font-size:8.45px;font-weight:bold;color:#f2f8ff;-webkit-text-stroke:0;">wersja 3 -</div>
<div class="t" style="left:425.0px;top:402.3px;width:74.5px;height:14px;line-height:14px;text-align:center;font-size:8.45px;font-weight:bold;color:#f2f8ff;-webkit-text-stroke:0;">przegląd</div>
<div class="t" style="left:425.0px;top:416.3px;width:74.5px;height:14px;line-height:14px;text-align:center;font-size:8.45px;font-weight:bold;color:#f2f8ff;-webkit-text-stroke:0;">budżetowy</div>
<div class="t" style="left:425.0px;top:430.3px;width:74.5px;height:14px;line-height:14px;text-align:center;font-size:8.45px;font-weight:bold;color:#f2f8ff;-webkit-text-stroke:0;">2022-10-03</div>
<div class="t" style="left:499.5px;top:374.3px;width:74.5px;height:14px;line-height:14px;text-align:center;font-size:8.45px;font-weight:bold;color:#f2f8ff;-webkit-text-stroke:0;">Bużet 2023 -</div>
<div class="t" style="left:499.5px;top:388.3px;width:74.5px;height:14px;line-height:14px;text-align:center;font-size:8.45px;font-weight:bold;color:#f2f8ff;-webkit-text-stroke:0;">wersja 2B</div>
<div class="t" style="left:499.5px;top:402.3px;width:74.5px;height:14px;line-height:14px;text-align:center;font-size:8.45px;font-weight:bold;color:#f2f8ff;-webkit-text-stroke:0;">2022-09-29</div>
<div class="t" style="left:499.5px;top:416.3px;width:74.5px;height:14px;line-height:14px;text-align:center;font-size:8.45px;font-weight:bold;color:#f2f8ff;-webkit-text-stroke:0;">(bez C103 i C104)</div>
<div class="t" style="left:574.0px;top:374.3px;width:75px;height:14px;line-height:14px;text-align:center;font-size:8.45px;font-weight:bold;color:#f2f8ff;-webkit-text-stroke:0;">Bużet 2023 -</div>
<div class="t" style="left:574.0px;top:388.3px;width:75px;height:14px;line-height:14px;text-align:center;font-size:8.45px;font-weight:bold;color:#f2f8ff;-webkit-text-stroke:0;">wersja 2A</div>
<div class="t" style="left:574.0px;top:402.3px;width:75px;height:14px;line-height:14px;text-align:center;font-size:8.45px;font-weight:bold;color:#f2f8ff;-webkit-text-stroke:0;">2022-09-29</div>
<div class="t" style="left:574.0px;top:416.3px;width:75px;height:14px;line-height:14px;text-align:center;font-size:8.45px;font-weight:bold;color:#f2f8ff;-webkit-text-stroke:0;">(bez C103)</div>
<div class="t" style="left:649.0px;top:374.3px;width:74.5px;height:14px;line-height:14px;text-align:center;font-size:8.45px;font-weight:bold;color:#f2f8ff;-webkit-text-stroke:0;">Bużet 2023 -</div>
<div class="t" style="left:649.0px;top:388.3px;width:74.5px;height:14px;line-height:14px;text-align:center;font-size:8.45px;font-weight:bold;color:#f2f8ff;-webkit-text-stroke:0;">wersja 2,</div>
<div class="t" style="left:649.0px;top:402.3px;width:74.5px;height:14px;line-height:14px;text-align:center;font-size:8.45px;font-weight:bold;color:#f2f8ff;-webkit-text-stroke:0;">2022-09-29</div>
<div class="t" style="left:723.5px;top:374.3px;width:75.0px;height:14px;line-height:14px;text-align:center;font-size:8.45px;font-weight:bold;color:#f2f8ff;-webkit-text-stroke:0;">Budżet 2023 -</div>
<div class="t" style="left:723.5px;top:388.3px;width:75.0px;height:14px;line-height:14px;text-align:center;font-size:8.45px;font-weight:bold;color:#f2f8ff;-webkit-text-stroke:0;">wersja 1</div>
<div class="t" style="left:723.5px;top:402.3px;width:75.0px;height:14px;line-height:14px;text-align:center;font-size:8.45px;font-weight:bold;color:#f2f8ff;-webkit-text-stroke:0;">skorygowana</div>
<div class="t" style="left:798.5px;top:374.3px;width:74.0px;height:14px;line-height:14px;text-align:center;font-size:8.45px;font-weight:bold;color:#f2f8ff;-webkit-text-stroke:0;">Budżet 2023 -</div>
<div class="t" style="left:798.5px;top:388.3px;width:74.0px;height:14px;line-height:14px;text-align:center;font-size:8.45px;font-weight:bold;color:#f2f8ff;-webkit-text-stroke:0;">wersja 1,</div>
<div class="t" style="left:798.5px;top:402.3px;width:74.0px;height:14px;line-height:14px;text-align:center;font-size:8.45px;font-weight:bold;color:#f2f8ff;-webkit-text-stroke:0;">2022-09-25</div>
<div style="left:87px;top:372.5px;width:70.5px;height:70px;border:1px solid #217346;"></div>
<div style="left:88px;top:373.5px;width:68.5px;height:68px;border:1px solid #b9ecd0;"></div>
<div style="left:87px;top:442.0px;width:785.5px;height:15.375px;background:#44546a;border-bottom:1px solid #44546a;"></div>
<div style="left:156.5px;top:442.0px;width:1px;height:15.375px;background:#5d6b7e;"></div>
<div style="left:349.5px;top:442.0px;width:1px;height:15.375px;background:#5d6b7e;"></div>
<div style="left:424.5px;top:442.0px;width:1px;height:15.375px;background:#5d6b7e;"></div>
<div style="left:499.0px;top:442.0px;width:1px;height:15.375px;background:#5d6b7e;"></div>
<div style="left:573.5px;top:442.0px;width:1px;height:15.375px;background:#5d6b7e;"></div>
<div style="left:648.5px;top:442.0px;width:1px;height:15.375px;background:#5d6b7e;"></div>
<div style="left:723.0px;top:442.0px;width:1px;height:15.375px;background:#5d6b7e;"></div>
<div style="left:798.0px;top:442.0px;width:1px;height:15.375px;background:#5d6b7e;"></div>
<div class="t" style="left:89.5px;top:443.98749999999995px;height:14px;line-height:14px;font-size:8.3px;font-weight:bold;color:#ffffff;transform:scaleY(1.1);-webkit-text-stroke:0;">TOTAL_C</div>
<div class="t" style="left:158.8px;top:444.0875px;height:14px;line-height:14px;font-size:8.5px;font-weight:bold;color:#ffffff;-webkit-text-stroke:0;">Koszty razem</div>
<div class="t" style="left:342.8px;top:443.8875px;width:80px;height:14px;line-height:14px;text-align:right;font-size:8.3px;font-weight:bold;color:#ffffff;transform:scaleY(1.1);-webkit-text-stroke:0;">183 242 737,31</div>
<div class="t" style="left:417.3px;top:443.8875px;width:80px;height:14px;line-height:14px;text-align:right;font-size:8.3px;font-weight:bold;color:#ffffff;transform:scaleY(1.1);-webkit-text-stroke:0;">185 413 221,03</div>
<div class="t" style="left:491.79999999999995px;top:443.8875px;width:80px;height:14px;line-height:14px;text-align:right;font-size:8.3px;font-weight:bold;color:#ffffff;transform:scaleY(1.1);-webkit-text-stroke:0;">182 202 539,01</div>
<div class="t" style="left:566.8px;top:443.8875px;width:80px;height:14px;line-height:14px;text-align:right;font-size:8.3px;font-weight:bold;color:#ffffff;transform:scaleY(1.1);-webkit-text-stroke:0;">185 675 910,03</div>
<div class="t" style="left:641.3px;top:443.8875px;width:80px;height:14px;line-height:14px;text-align:right;font-size:8.3px;font-weight:bold;color:#ffffff;transform:scaleY(1.1);-webkit-text-stroke:0;">184 043 511,15</div>
<div class="t" style="left:716.3px;top:443.8875px;width:80px;height:14px;line-height:14px;text-align:right;font-size:8.3px;font-weight:bold;color:#ffffff;transform:scaleY(1.1);-webkit-text-stroke:0;">183 396 105,65</div>
<div class="t" style="left:790.3px;top:443.8875px;width:80px;height:14px;line-height:14px;text-align:right;font-size:8.3px;font-weight:bold;color:#ffffff;transform:scaleY(1.1);-webkit-text-stroke:0;">185 610 029,78</div>
<div style="left:87px;top:457.375px;width:785.5px;height:15.375px;background:#ddebf7;border-bottom:1px solid #dcdcdc;"></div>
<div style="left:156.5px;top:457.375px;width:1px;height:15.375px;background:#d9d9d9;"></div>
<div style="left:349.5px;top:457.375px;width:1px;height:15.375px;background:#d9d9d9;"></div>
<div style="left:424.5px;top:457.375px;width:1px;height:15.375px;background:#d9d9d9;"></div>
<div style="left:499.0px;top:457.375px;width:1px;height:15.375px;background:#d9d9d9;"></div>
<div style="left:573.5px;top:457.375px;width:1px;height:15.375px;background:#d9d9d9;"></div>
<div style="left:648.5px;top:457.375px;width:1px;height:15.375px;background:#d9d9d9;"></div>
<div style="left:723.0px;top:457.375px;width:1px;height:15.375px;background:#d9d9d9;"></div>
<div style="left:798.0px;top:457.375px;width:1px;height:15.375px;background:#d9d9d9;"></div>
<div class="t" style="left:89.5px;top:459.36249999999995px;height:14px;line-height:14px;font-size:8.3px;font-weight:bold;color:#111;transform:scaleY(1.1);-webkit-text-stroke:0;">C100</div>
<div class="t" style="left:158.8px;top:459.4625px;height:14px;line-height:14px;font-size:8.5px;font-weight:bold;color:#111;-webkit-text-stroke:0;">Koszty osobowe</div>
<div class="t" style="left:342.8px;top:459.2625px;width:80px;height:14px;line-height:14px;text-align:right;font-size:8.3px;font-weight:bold;color:#111;transform:scaleY(1.1);-webkit-text-stroke:0;">84 271 770,15</div>
<div class="t" style="left:417.3px;top:459.2625px;width:80px;height:14px;line-height:14px;text-align:right;font-size:8.3px;font-weight:bold;color:#111;transform:scaleY(1.1);-webkit-text-stroke:0;">87 309 971,07</div>
<div class="t" style="left:491.79999999999995px;top:459.2625px;width:80px;height:14px;line-height:14px;text-align:right;font-size:8.3px;font-weight:bold;color:#111;transform:scaleY(1.1);-webkit-text-stroke:0;">83 041 178,16</div>
<div class="t" style="left:566.8px;top:459.2625px;width:80px;height:14px;line-height:14px;text-align:right;font-size:8.3px;font-weight:bold;color:#111;transform:scaleY(1.1);-webkit-text-stroke:0;">86 041 178,16</div>
<div class="t" style="left:641.3px;top:459.2625px;width:80px;height:14px;line-height:14px;text-align:right;font-size:8.3px;font-weight:bold;color:#111;transform:scaleY(1.1);-webkit-text-stroke:0;">86 067 270,15</div>
<div class="t" style="left:716.3px;top:459.2625px;width:80px;height:14px;line-height:14px;text-align:right;font-size:8.3px;font-weight:bold;color:#111;transform:scaleY(1.1);-webkit-text-stroke:0;">83 647 770,15</div>
<div class="t" style="left:790.3px;top:459.2625px;width:80px;height:14px;line-height:14px;text-align:right;font-size:8.3px;font-weight:bold;color:#111;transform:scaleY(1.1);-webkit-text-stroke:0;">83 707 770,15</div>
<div style="left:87px;top:472.75px;width:785.5px;height:15.375px;background:#ffffff;border-bottom:1px solid #dcdcdc;"></div>
<div style="left:156.5px;top:472.75px;width:1px;height:15.375px;background:#d9d9d9;"></div>
<div style="left:349.5px;top:472.75px;width:1px;height:15.375px;background:#d9d9d9;"></div>
<div style="left:424.5px;top:472.75px;width:1px;height:15.375px;background:#d9d9d9;"></div>
<div style="left:499.0px;top:472.75px;width:1px;height:15.375px;background:#d9d9d9;"></div>
<div style="left:573.5px;top:472.75px;width:1px;height:15.375px;background:#d9d9d9;"></div>
<div style="left:648.5px;top:472.75px;width:1px;height:15.375px;background:#d9d9d9;"></div>
<div style="left:723.0px;top:472.75px;width:1px;height:15.375px;background:#d9d9d9;"></div>
<div style="left:798.0px;top:472.75px;width:1px;height:15.375px;background:#d9d9d9;"></div>
<div class="t" style="left:89.5px;top:474.73749999999995px;height:14px;line-height:14px;font-size:8.4px;color:#222;transform:scaleY(1.1);">C101</div>
<div class="t" style="left:158.8px;top:474.8375px;height:14px;line-height:14px;font-size:9.3px;color:#222;">Wynagrodzenia podstawowe</div>
<div class="t" style="left:342.8px;top:474.6375px;width:80px;height:14px;line-height:14px;text-align:right;font-size:8.3px;font-weight:normal;color:#222;transform:scaleY(1.1);">63 031 237,47</div>
<div class="t" style="left:417.3px;top:474.6375px;width:80px;height:14px;line-height:14px;text-align:right;font-size:8.3px;font-weight:normal;color:#222;transform:scaleY(1.1);">63 031 237,47</div>
<div class="t" style="left:491.79999999999995px;top:474.6375px;width:80px;height:14px;line-height:14px;text-align:right;font-size:8.3px;font-weight:normal;color:#222;transform:scaleY(1.1);">63 031 237,47</div>
<div class="t" style="left:566.8px;top:474.6375px;width:80px;height:14px;line-height:14px;text-align:right;font-size:8.3px;font-weight:normal;color:#222;transform:scaleY(1.1);">63 031 237,47</div>
<div class="t" style="left:641.3px;top:474.6375px;width:80px;height:14px;line-height:14px;text-align:right;font-size:8.3px;font-weight:normal;color:#222;transform:scaleY(1.1);">63 031 237,47</div>
<div class="t" style="left:716.3px;top:474.6375px;width:80px;height:14px;line-height:14px;text-align:right;font-size:8.3px;font-weight:normal;color:#222;transform:scaleY(1.1);">63 031 237,47</div>
<div class="t" style="left:790.3px;top:474.6375px;width:80px;height:14px;line-height:14px;text-align:right;font-size:8.3px;font-weight:normal;color:#222;transform:scaleY(1.1);">63 031 237,47</div>
<div style="left:87px;top:488.125px;width:785.5px;height:15.375px;background:#ffffff;border-bottom:1px solid #dcdcdc;"></div>
<div style="left:156.5px;top:488.125px;width:1px;height:15.375px;background:#d9d9d9;"></div>
<div style="left:349.5px;top:488.125px;width:1px;height:15.375px;background:#d9d9d9;"></div>
<div style="left:424.5px;top:488.125px;width:1px;height:15.375px;background:#d9d9d9;"></div>
<div style="left:499.0px;top:488.125px;width:1px;height:15.375px;background:#d9d9d9;"></div>
<div style="left:573.5px;top:488.125px;width:1px;height:15.375px;background:#d9d9d9;"></div>
<div style="left:648.5px;top:488.125px;width:1px;height:15.375px;background:#d9d9d9;"></div>
<div style="left:723.0px;top:488.125px;width:1px;height:15.375px;background:#d9d9d9;"></div>
<div style="left:798.0px;top:488.125px;width:1px;height:15.375px;background:#d9d9d9;"></div>
<div class="t" style="left:89.5px;top:490.11249999999995px;height:14px;line-height:14px;font-size:8.4px;color:#222;transform:scaleY(1.1);">C102</div>
<div class="t" style="left:158.8px;top:490.2125px;height:14px;line-height:14px;font-size:9.3px;color:#222;">Premie</div>
<div class="t" style="left:342.8px;top:490.0125px;width:80px;height:14px;line-height:14px;text-align:right;font-size:8.3px;font-weight:normal;color:#222;transform:scaleY(1.1);">18 872 933,46</div>
<div class="t" style="left:417.3px;top:490.0125px;width:80px;height:14px;line-height:14px;text-align:right;font-size:8.3px;font-weight:normal;color:#222;transform:scaleY(1.1);">18 872 933,46</div>
<div class="t" style="left:491.79999999999995px;top:490.0125px;width:80px;height:14px;line-height:14px;text-align:right;font-size:8.3px;font-weight:normal;color:#222;transform:scaleY(1.1);">18 872 933,46</div>
<div class="t" style="left:566.8px;top:490.0125px;width:80px;height:14px;line-height:14px;text-align:right;font-size:8.3px;font-weight:normal;color:#222;transform:scaleY(1.1);">18 872 933,46</div>
<div class="t" style="left:641.3px;top:490.0125px;width:80px;height:14px;line-height:14px;text-align:right;font-size:8.3px;font-weight:normal;color:#222;transform:scaleY(1.1);">18 872 933,46</div>
<div class="t" style="left:716.3px;top:490.0125px;width:80px;height:14px;line-height:14px;text-align:right;font-size:8.3px;font-weight:normal;color:#222;transform:scaleY(1.1);">18 872 933,46</div>
<div class="t" style="left:790.3px;top:490.0125px;width:80px;height:14px;line-height:14px;text-align:right;font-size:8.3px;font-weight:normal;color:#222;transform:scaleY(1.1);">18 872 933,46</div>
<div style="left:87px;top:503.5px;width:785.5px;height:15.375px;background:#ffffff;border-bottom:1px solid #dcdcdc;"></div>
<div style="left:156.5px;top:503.5px;width:1px;height:15.375px;background:#d9d9d9;"></div>
<div style="left:349.5px;top:503.5px;width:1px;height:15.375px;background:#d9d9d9;"></div>
<div style="left:424.5px;top:503.5px;width:1px;height:15.375px;background:#d9d9d9;"></div>
<div style="left:499.0px;top:503.5px;width:1px;height:15.375px;background:#d9d9d9;"></div>
<div style="left:573.5px;top:503.5px;width:1px;height:15.375px;background:#d9d9d9;"></div>
<div style="left:648.5px;top:503.5px;width:1px;height:15.375px;background:#d9d9d9;"></div>
<div style="left:723.0px;top:503.5px;width:1px;height:15.375px;background:#d9d9d9;"></div>
<div style="left:798.0px;top:503.5px;width:1px;height:15.375px;background:#d9d9d9;"></div>
<div class="t" style="left:89.5px;top:505.48749999999995px;height:14px;line-height:14px;font-size:8.4px;color:#222;transform:scaleY(1.1);">C103</div>
<div class="t" style="left:158.8px;top:505.5875px;height:14px;line-height:14px;font-size:9.3px;color:#222;">ZFŚS</div>
<div class="t" style="left:342.8px;top:505.38749999999993px;width:80px;height:14px;line-height:14px;text-align:right;font-size:8.3px;font-weight:normal;color:#222;transform:scaleY(1.1);">314 356,65</div>
<div class="t" style="left:417.3px;top:505.38749999999993px;width:80px;height:14px;line-height:14px;text-align:right;font-size:8.3px;font-weight:normal;color:#222;transform:scaleY(1.1);">314 356,65</div>
<div class="t" style="left:491.79999999999995px;top:505.38749999999993px;width:80px;height:14px;line-height:14px;text-align:right;font-size:8.3px;font-weight:normal;color:#222;transform:scaleY(1.1);">314 356,65</div>
<div class="t" style="left:566.8px;top:505.38749999999993px;width:80px;height:14px;line-height:14px;text-align:right;font-size:8.3px;font-weight:normal;color:#222;transform:scaleY(1.1);">314 356,65</div>
<div class="t" style="left:641.3px;top:505.38749999999993px;width:80px;height:14px;line-height:14px;text-align:right;font-size:8.3px;font-weight:normal;color:#222;transform:scaleY(1.1);">314 356,65</div>
<div class="t" style="left:716.3px;top:505.38749999999993px;width:80px;height:14px;line-height:14px;text-align:right;font-size:8.3px;font-weight:normal;color:#222;transform:scaleY(1.1);">314 356,65</div>
<div class="t" style="left:790.3px;top:505.38749999999993px;width:80px;height:14px;line-height:14px;text-align:right;font-size:8.3px;font-weight:normal;color:#222;transform:scaleY(1.1);">314 356,65</div>
<div style="left:87px;top:518.875px;width:785.5px;height:15.375px;background:#ffffff;border-bottom:1px solid #dcdcdc;"></div>
<div style="left:156.5px;top:518.875px;width:1px;height:15.375px;background:#d9d9d9;"></div>
<div style="left:349.5px;top:518.875px;width:1px;height:15.375px;background:#d9d9d9;"></div>
<div style="left:424.5px;top:518.875px;width:1px;height:15.375px;background:#d9d9d9;"></div>
<div style="left:499.0px;top:518.875px;width:1px;height:15.375px;background:#d9d9d9;"></div>
<div style="left:573.5px;top:518.875px;width:1px;height:15.375px;background:#d9d9d9;"></div>
<div style="left:648.5px;top:518.875px;width:1px;height:15.375px;background:#d9d9d9;"></div>
<div style="left:723.0px;top:518.875px;width:1px;height:15.375px;background:#d9d9d9;"></div>
<div style="left:798.0px;top:518.875px;width:1px;height:15.375px;background:#d9d9d9;"></div>
<div class="t" style="left:89.5px;top:520.8625px;height:14px;line-height:14px;font-size:8.4px;color:#222;transform:scaleY(1.1);">C109</div>
<div class="t" style="left:158.8px;top:520.9625px;height:14px;line-height:14px;font-size:9.3px;color:#222;">Wynajem pracowników</div>
<div class="t" style="left:342.8px;top:520.7624999999999px;width:80px;height:14px;line-height:14px;text-align:right;font-size:8.3px;font-weight:normal;color:#222;transform:scaleY(1.1);">547 242,57</div>
<div class="t" style="left:417.3px;top:520.7624999999999px;width:80px;height:14px;line-height:14px;text-align:right;font-size:8.3px;font-weight:normal;color:#222;transform:scaleY(1.1);">5 091 443,49</div>
<div class="t" style="left:491.79999999999995px;top:520.7624999999999px;width:80px;height:14px;line-height:14px;text-align:right;font-size:8.3px;font-weight:normal;color:#222;transform:scaleY(1.1);">522 650,58</div>
<div class="t" style="left:566.8px;top:520.7624999999999px;width:80px;height:14px;line-height:14px;text-align:right;font-size:8.3px;font-weight:normal;color:#222;transform:scaleY(1.1);">522 650,58</div>
<div class="t" style="left:641.3px;top:520.7624999999999px;width:80px;height:14px;line-height:14px;text-align:right;font-size:8.3px;font-weight:normal;color:#222;transform:scaleY(1.1);">547 242,57</div>
<div class="t" style="left:716.3px;top:520.7624999999999px;width:80px;height:14px;line-height:14px;text-align:right;font-size:8.3px;font-weight:normal;color:#222;transform:scaleY(1.1);">547 242,57</div>
<div class="t" style="left:790.3px;top:520.7624999999999px;width:80px;height:14px;line-height:14px;text-align:right;font-size:8.3px;font-weight:normal;color:#222;transform:scaleY(1.1);">547 242,57</div>
<div style="left:87px;top:534.25px;width:785.5px;height:15.375px;background:#ffffff;border-bottom:1px solid #dcdcdc;"></div>
<div style="left:156.5px;top:534.25px;width:1px;height:15.375px;background:#d9d9d9;"></div>
<div style="left:349.5px;top:534.25px;width:1px;height:15.375px;background:#d9d9d9;"></div>
<div style="left:424.5px;top:534.25px;width:1px;height:15.375px;background:#d9d9d9;"></div>
<div style="left:499.0px;top:534.25px;width:1px;height:15.375px;background:#d9d9d9;"></div>
<div style="left:573.5px;top:534.25px;width:1px;height:15.375px;background:#d9d9d9;"></div>
<div style="left:648.5px;top:534.25px;width:1px;height:15.375px;background:#d9d9d9;"></div>
<div style="left:723.0px;top:534.25px;width:1px;height:15.375px;background:#d9d9d9;"></div>
<div style="left:798.0px;top:534.25px;width:1px;height:15.375px;background:#d9d9d9;"></div>
<div class="t" style="left:89.5px;top:536.2375px;height:14px;line-height:14px;font-size:8.4px;color:#222;transform:scaleY(1.1);">C112</div>
<div class="t" style="left:158.8px;top:536.3375px;height:14px;line-height:14px;font-size:9.3px;color:#222;">Wynajem pracowników - prowizja</div>
<div class="t" style="left:342.8px;top:536.1374999999999px;width:80px;height:14px;line-height:14px;text-align:right;font-size:8.3px;font-weight:normal;color:#222;transform:scaleY(1.1);">1 506 000,00</div>
<div class="t" style="left:491.79999999999995px;top:536.1374999999999px;width:80px;height:14px;line-height:14px;text-align:right;font-size:8.3px;font-weight:normal;color:#222;transform:scaleY(1.1);">300 000,00</div>
<div class="t" style="left:566.8px;top:536.1374999999999px;width:80px;height:14px;line-height:14px;text-align:right;font-size:8.3px;font-weight:normal;color:#222;transform:scaleY(1.1);">3 300 000,00</div>
<div class="t" style="left:641.3px;top:536.1374999999999px;width:80px;height:14px;line-height:14px;text-align:right;font-size:8.3px;font-weight:normal;color:#222;transform:scaleY(1.1);">3 301 500,00</div>
<div class="t" style="left:716.3px;top:536.1374999999999px;width:80px;height:14px;line-height:14px;text-align:right;font-size:8.3px;font-weight:normal;color:#222;transform:scaleY(1.1);">882 000,00</div>
<div class="t" style="left:790.3px;top:536.1374999999999px;width:80px;height:14px;line-height:14px;text-align:right;font-size:8.3px;font-weight:normal;color:#222;transform:scaleY(1.1);">942 000,00</div>
<div style="left:87px;top:549.625px;width:785.5px;height:15.375px;background:#ddebf7;border-bottom:1px solid #dcdcdc;"></div>
<div style="left:156.5px;top:549.625px;width:1px;height:15.375px;background:#d9d9d9;"></div>
<div style="left:349.5px;top:549.625px;width:1px;height:15.375px;background:#d9d9d9;"></div>
<div style="left:424.5px;top:549.625px;width:1px;height:15.375px;background:#d9d9d9;"></div>
<div style="left:499.0px;top:549.625px;width:1px;height:15.375px;background:#d9d9d9;"></div>
<div style="left:573.5px;top:549.625px;width:1px;height:15.375px;background:#d9d9d9;"></div>
<div style="left:648.5px;top:549.625px;width:1px;height:15.375px;background:#d9d9d9;"></div>
<div style="left:723.0px;top:549.625px;width:1px;height:15.375px;background:#d9d9d9;"></div>
<div style="left:798.0px;top:549.625px;width:1px;height:15.375px;background:#d9d9d9;"></div>
<div class="t" style="left:89.5px;top:551.6125px;height:14px;line-height:14px;font-size:8.3px;font-weight:bold;color:#111;transform:scaleY(1.1);-webkit-text-stroke:0;">C200</div>
<div class="t" style="left:158.8px;top:551.7125px;height:14px;line-height:14px;font-size:8.5px;font-weight:bold;color:#111;-webkit-text-stroke:0;">Pozostałe koszty pracownicze</div>
<div class="t" style="left:342.8px;top:551.5124999999999px;width:80px;height:14px;line-height:14px;text-align:right;font-size:8.3px;font-weight:bold;color:#111;transform:scaleY(1.1);-webkit-text-stroke:0;">2 863 719,36</div>
<div class="t" style="left:417.3px;top:551.5124999999999px;width:80px;height:14px;line-height:14px;text-align:right;font-size:8.3px;font-weight:bold;color:#111;transform:scaleY(1.1);-webkit-text-stroke:0;">1 890 656,67</div>
<div class="t" style="left:491.79999999999995px;top:551.5124999999999px;width:80px;height:14px;line-height:14px;text-align:right;font-size:8.3px;font-weight:bold;color:#111;transform:scaleY(1.1);-webkit-text-stroke:0;">1 890 656,67</div>
<div class="t" style="left:566.8px;top:551.5124999999999px;width:80px;height:14px;line-height:14px;text-align:right;font-size:8.3px;font-weight:bold;color:#111;transform:scaleY(1.1);-webkit-text-stroke:0;">1 897 227,69</div>
<div class="t" style="left:641.3px;top:551.5124999999999px;width:80px;height:14px;line-height:14px;text-align:right;font-size:8.3px;font-weight:bold;color:#111;transform:scaleY(1.1);-webkit-text-stroke:0;">1 894 819,00</div>
<div class="t" style="left:716.3px;top:551.5124999999999px;width:80px;height:14px;line-height:14px;text-align:right;font-size:8.3px;font-weight:bold;color:#111;transform:scaleY(1.1);-webkit-text-stroke:0;">2 574 660,36</div>
<div class="t" style="left:790.3px;top:551.5124999999999px;width:80px;height:14px;line-height:14px;text-align:right;font-size:8.3px;font-weight:bold;color:#111;transform:scaleY(1.1);-webkit-text-stroke:0;">4 255 719,36</div>
<div style="left:87px;top:565.0px;width:785.5px;height:15.375px;background:#ffffff;border-bottom:1px solid #dcdcdc;"></div>
<div style="left:156.5px;top:565.0px;width:1px;height:15.375px;background:#d9d9d9;"></div>
<div style="left:349.5px;top:565.0px;width:1px;height:15.375px;background:#d9d9d9;"></div>
<div style="left:424.5px;top:565.0px;width:1px;height:15.375px;background:#d9d9d9;"></div>
<div style="left:499.0px;top:565.0px;width:1px;height:15.375px;background:#d9d9d9;"></div>
<div style="left:573.5px;top:565.0px;width:1px;height:15.375px;background:#d9d9d9;"></div>
<div style="left:648.5px;top:565.0px;width:1px;height:15.375px;background:#d9d9d9;"></div>
<div style="left:723.0px;top:565.0px;width:1px;height:15.375px;background:#d9d9d9;"></div>
<div style="left:798.0px;top:565.0px;width:1px;height:15.375px;background:#d9d9d9;"></div>
<div class="t" style="left:89.5px;top:566.9875px;height:14px;line-height:14px;font-size:8.4px;color:#222;transform:scaleY(1.1);">C201</div>
<div class="t" style="left:158.8px;top:567.0875px;height:14px;line-height:14px;font-size:9.3px;color:#222;">Podróże służbowe</div>
<div class="t" style="left:342.8px;top:566.8874999999999px;width:80px;height:14px;line-height:14px;text-align:right;font-size:8.3px;font-weight:normal;color:#222;transform:scaleY(1.1);">613 627,56</div>
<div class="t" style="left:417.3px;top:566.8874999999999px;width:80px;height:14px;line-height:14px;text-align:right;font-size:8.3px;font-weight:normal;color:#222;transform:scaleY(1.1);">631 309,41</div>
<div class="t" style="left:491.79999999999995px;top:566.8874999999999px;width:80px;height:14px;line-height:14px;text-align:right;font-size:8.3px;font-weight:normal;color:#222;transform:scaleY(1.1);">631 309,41</div>
<div class="t" style="left:566.8px;top:566.8874999999999px;width:80px;height:14px;line-height:14px;text-align:right;font-size:8.3px;font-weight:normal;color:#222;transform:scaleY(1.1);">637 880,43</div>
<div class="t" style="left:641.3px;top:566.8874999999999px;width:80px;height:14px;line-height:14px;text-align:right;font-size:8.3px;font-weight:normal;color:#222;transform:scaleY(1.1);">631 271,74</div>
<div class="t" style="left:716.3px;top:566.8874999999999px;width:80px;height:14px;line-height:14px;text-align:right;font-size:8.3px;font-weight:normal;color:#222;transform:scaleY(1.1);">613 627,56</div>
<div class="t" style="left:790.3px;top:566.8874999999999px;width:80px;height:14px;line-height:14px;text-align:right;font-size:8.3px;font-weight:normal;color:#222;transform:scaleY(1.1);">613 627,56</div>
<div style="left:87px;top:580.375px;width:785.5px;height:15.375px;background:#ffffff;border-bottom:1px solid #dcdcdc;"></div>
<div style="left:156.5px;top:580.375px;width:1px;height:15.375px;background:#d9d9d9;"></div>
<div style="left:349.5px;top:580.375px;width:1px;height:15.375px;background:#d9d9d9;"></div>
<div style="left:424.5px;top:580.375px;width:1px;height:15.375px;background:#d9d9d9;"></div>
<div style="left:499.0px;top:580.375px;width:1px;height:15.375px;background:#d9d9d9;"></div>
<div style="left:573.5px;top:580.375px;width:1px;height:15.375px;background:#d9d9d9;"></div>
<div style="left:648.5px;top:580.375px;width:1px;height:15.375px;background:#d9d9d9;"></div>
<div style="left:723.0px;top:580.375px;width:1px;height:15.375px;background:#d9d9d9;"></div>
<div style="left:798.0px;top:580.375px;width:1px;height:15.375px;background:#d9d9d9;"></div>
<div class="t" style="left:89.5px;top:582.3625px;height:14px;line-height:14px;font-size:8.4px;color:#222;transform:scaleY(1.1);">C202</div>
<div class="t" style="left:158.8px;top:582.4625px;height:14px;line-height:14px;font-size:9.3px;color:#222;">Szkolenie i meetingi</div>
<div class="t" style="left:342.8px;top:582.2624999999999px;width:80px;height:14px;line-height:14px;text-align:right;font-size:8.3px;font-weight:normal;color:#222;transform:scaleY(1.1);">490 495,86</div>
<div class="t" style="left:417.3px;top:582.2624999999999px;width:80px;height:14px;line-height:14px;text-align:right;font-size:8.3px;font-weight:normal;color:#222;transform:scaleY(1.1);">504 524,43</div>
<div class="t" style="left:491.79999999999995px;top:582.2624999999999px;width:80px;height:14px;line-height:14px;text-align:right;font-size:8.3px;font-weight:normal;color:#222;transform:scaleY(1.1);">504 524,43</div>
<div class="t" style="left:566.8px;top:582.2624999999999px;width:80px;height:14px;line-height:14px;text-align:right;font-size:8.3px;font-weight:normal;color:#222;transform:scaleY(1.1);">504 524,43</div>
<div class="t" style="left:641.3px;top:582.2624999999999px;width:80px;height:14px;line-height:14px;text-align:right;font-size:8.3px;font-weight:normal;color:#222;transform:scaleY(1.1);">504 524,43</div>
<div class="t" style="left:716.3px;top:582.2624999999999px;width:80px;height:14px;line-height:14px;text-align:right;font-size:8.3px;font-weight:normal;color:#222;transform:scaleY(1.1);">490 495,86</div>
<div class="t" style="left:790.3px;top:582.2624999999999px;width:80px;height:14px;line-height:14px;text-align:right;font-size:8.3px;font-weight:normal;color:#222;transform:scaleY(1.1);">490 495,86</div>
<div style="left:87px;top:595.75px;width:785.5px;height:15.375px;background:#ffffff;border-bottom:1px solid #dcdcdc;"></div>
<div style="left:156.5px;top:595.75px;width:1px;height:15.375px;background:#d9d9d9;"></div>
<div style="left:349.5px;top:595.75px;width:1px;height:15.375px;background:#d9d9d9;"></div>
<div style="left:424.5px;top:595.75px;width:1px;height:15.375px;background:#d9d9d9;"></div>
<div style="left:499.0px;top:595.75px;width:1px;height:15.375px;background:#d9d9d9;"></div>
<div style="left:573.5px;top:595.75px;width:1px;height:15.375px;background:#d9d9d9;"></div>
<div style="left:648.5px;top:595.75px;width:1px;height:15.375px;background:#d9d9d9;"></div>
<div style="left:723.0px;top:595.75px;width:1px;height:15.375px;background:#d9d9d9;"></div>
<div style="left:798.0px;top:595.75px;width:1px;height:15.375px;background:#d9d9d9;"></div>
<div class="t" style="left:89.5px;top:597.7375px;height:14px;line-height:14px;font-size:8.4px;color:#222;transform:scaleY(1.1);">C203</div>
<div class="t" style="left:158.8px;top:597.8375px;height:14px;line-height:14px;font-size:9.3px;color:#222;">Telekomunikacja</div>
<div class="t" style="left:342.8px;top:597.6374999999999px;width:80px;height:14px;line-height:14px;text-align:right;font-size:8.3px;font-weight:normal;color:#222;transform:scaleY(1.1);">118 609,38</div>
<div class="t" style="left:417.3px;top:597.6374999999999px;width:80px;height:14px;line-height:14px;text-align:right;font-size:8.3px;font-weight:normal;color:#222;transform:scaleY(1.1);">125 879,58</div>
<div class="t" style="left:491.79999999999995px;top:597.6374999999999px;width:80px;height:14px;line-height:14px;text-align:right;font-size:8.3px;font-weight:normal;color:#222;transform:scaleY(1.1);">125 879,58</div>
<div class="t" style="left:566.8px;top:597.6374999999999px;width:80px;height:14px;line-height:14px;text-align:right;font-size:8.3px;font-weight:normal;color:#222;transform:scaleY(1.1);">125 879,58</div>
<div class="t" style="left:641.3px;top:597.6374999999999px;width:80px;height:14px;line-height:14px;text-align:right;font-size:8.3px;font-weight:normal;color:#222;transform:scaleY(1.1);">125 879,58</div>
<div class="t" style="left:716.3px;top:597.6374999999999px;width:80px;height:14px;line-height:14px;text-align:right;font-size:8.3px;font-weight:normal;color:#222;transform:scaleY(1.1);">118 609,38</div>
<div class="t" style="left:790.3px;top:597.6374999999999px;width:80px;height:14px;line-height:14px;text-align:right;font-size:8.3px;font-weight:normal;color:#222;transform:scaleY(1.1);">118 609,38</div>
<div style="left:87px;top:611.125px;width:785.5px;height:15.375px;background:#ffffff;border-bottom:1px solid #dcdcdc;"></div>
<div style="left:156.5px;top:611.125px;width:1px;height:15.375px;background:#d9d9d9;"></div>
<div style="left:349.5px;top:611.125px;width:1px;height:15.375px;background:#d9d9d9;"></div>
<div style="left:424.5px;top:611.125px;width:1px;height:15.375px;background:#d9d9d9;"></div>
<div style="left:499.0px;top:611.125px;width:1px;height:15.375px;background:#d9d9d9;"></div>
<div style="left:573.5px;top:611.125px;width:1px;height:15.375px;background:#d9d9d9;"></div>
<div style="left:648.5px;top:611.125px;width:1px;height:15.375px;background:#d9d9d9;"></div>
<div style="left:723.0px;top:611.125px;width:1px;height:15.375px;background:#d9d9d9;"></div>
<div style="left:798.0px;top:611.125px;width:1px;height:15.375px;background:#d9d9d9;"></div>
<div class="t" style="left:89.5px;top:613.1125px;height:14px;line-height:14px;font-size:8.4px;color:#222;transform:scaleY(1.1);">C204</div>
<div class="t" style="left:158.8px;top:613.2125px;height:14px;line-height:14px;font-size:9.3px;color:#222;">BHP</div>
<div class="t" style="left:342.8px;top:613.0124999999999px;width:80px;height:14px;line-height:14px;text-align:right;font-size:8.3px;font-weight:normal;color:#222;transform:scaleY(1.1);">315 561,12</div>
<div class="t" style="left:417.3px;top:613.0124999999999px;width:80px;height:14px;line-height:14px;text-align:right;font-size:8.3px;font-weight:normal;color:#222;transform:scaleY(1.1);">314 347,77</div>
<div class="t" style="left:491.79999999999995px;top:613.0124999999999px;width:80px;height:14px;line-height:14px;text-align:right;font-size:8.3px;font-weight:normal;color:#222;transform:scaleY(1.1);">314 347,77</div>
<div class="t" style="left:566.8px;top:613.0124999999999px;width:80px;height:14px;line-height:14px;text-align:right;font-size:8.3px;font-weight:normal;color:#222;transform:scaleY(1.1);">314 347,77</div>
<div class="t" style="left:641.3px;top:613.0124999999999px;width:80px;height:14px;line-height:14px;text-align:right;font-size:8.3px;font-weight:normal;color:#222;transform:scaleY(1.1);">314 347,77</div>
<div class="t" style="left:716.3px;top:613.0124999999999px;width:80px;height:14px;line-height:14px;text-align:right;font-size:8.3px;font-weight:normal;color:#222;transform:scaleY(1.1);">315 561,12</div>
<div class="t" style="left:790.3px;top:613.0124999999999px;width:80px;height:14px;line-height:14px;text-align:right;font-size:8.3px;font-weight:normal;color:#222;transform:scaleY(1.1);">315 561,12</div>
<div style="left:87px;top:626.5px;width:785.5px;height:15.375px;background:#ffffff;border-bottom:1px solid #dcdcdc;"></div>
<div style="left:156.5px;top:626.5px;width:1px;height:15.375px;background:#d9d9d9;"></div>
<div style="left:349.5px;top:626.5px;width:1px;height:15.375px;background:#d9d9d9;"></div>
<div style="left:424.5px;top:626.5px;width:1px;height:15.375px;background:#d9d9d9;"></div>
<div style="left:499.0px;top:626.5px;width:1px;height:15.375px;background:#d9d9d9;"></div>
<div style="left:573.5px;top:626.5px;width:1px;height:15.375px;background:#d9d9d9;"></div>
<div style="left:648.5px;top:626.5px;width:1px;height:15.375px;background:#d9d9d9;"></div>
<div style="left:723.0px;top:626.5px;width:1px;height:15.375px;background:#d9d9d9;"></div>
<div style="left:798.0px;top:626.5px;width:1px;height:15.375px;background:#d9d9d9;"></div>
<div class="t" style="left:89.5px;top:628.4875px;height:14px;line-height:14px;font-size:8.4px;color:#222;transform:scaleY(1.1);">C205</div>
<div class="t" style="left:158.8px;top:628.5875px;height:14px;line-height:14px;font-size:9.3px;color:#222;">Badania lekarskie</div>
<div class="t" style="left:342.8px;top:628.3874999999999px;width:80px;height:14px;line-height:14px;text-align:right;font-size:8.3px;font-weight:normal;color:#222;transform:scaleY(1.1);">294 166,44</div>
<div class="t" style="left:417.3px;top:628.3874999999999px;width:80px;height:14px;line-height:14px;text-align:right;font-size:8.3px;font-weight:normal;color:#222;transform:scaleY(1.1);">314 595,48</div>
<div class="t" style="left:491.79999999999995px;top:628.3874999999999px;width:80px;height:14px;line-height:14px;text-align:right;font-size:8.3px;font-weight:normal;color:#222;transform:scaleY(1.1);">314 595,48</div>
<div class="t" style="left:566.8px;top:628.3874999999999px;width:80px;height:14px;line-height:14px;text-align:right;font-size:8.3px;font-weight:normal;color:#222;transform:scaleY(1.1);">314 595,48</div>
<div class="t" style="left:641.3px;top:628.3874999999999px;width:80px;height:14px;line-height:14px;text-align:right;font-size:8.3px;font-weight:normal;color:#222;transform:scaleY(1.1);">314 595,48</div>
<div class="t" style="left:716.3px;top:628.3874999999999px;width:80px;height:14px;line-height:14px;text-align:right;font-size:8.3px;font-weight:normal;color:#222;transform:scaleY(1.1);">294 166,44</div>
<div class="t" style="left:790.3px;top:628.3874999999999px;width:80px;height:14px;line-height:14px;text-align:right;font-size:8.3px;font-weight:normal;color:#222;transform:scaleY(1.1);">294 166,44</div>
<div style="left:87px;top:641.875px;width:785.5px;height:15.375px;background:#ffffff;border-bottom:1px solid #dcdcdc;"></div>
<div style="left:156.5px;top:641.875px;width:1px;height:15.375px;background:#d9d9d9;"></div>
<div style="left:349.5px;top:641.875px;width:1px;height:15.375px;background:#d9d9d9;"></div>
<div style="left:424.5px;top:641.875px;width:1px;height:15.375px;background:#d9d9d9;"></div>
<div style="left:499.0px;top:641.875px;width:1px;height:15.375px;background:#d9d9d9;"></div>
<div style="left:573.5px;top:641.875px;width:1px;height:15.375px;background:#d9d9d9;"></div>
<div style="left:648.5px;top:641.875px;width:1px;height:15.375px;background:#d9d9d9;"></div>
<div style="left:723.0px;top:641.875px;width:1px;height:15.375px;background:#d9d9d9;"></div>
<div style="left:798.0px;top:641.875px;width:1px;height:15.375px;background:#d9d9d9;"></div>
<div class="t" style="left:89.5px;top:643.8625px;height:14px;line-height:14px;font-size:8.4px;color:#222;transform:scaleY(1.1);">C206</div>
<div class="t" style="left:158.8px;top:643.9625px;height:14px;line-height:14px;font-size:9.3px;color:#222;">Abonamenty medyczne</div>
<div class="t" style="left:342.8px;top:643.7624999999999px;width:80px;height:14px;line-height:14px;text-align:right;font-size:8.3px;font-weight:normal;color:#222;transform:scaleY(1.1);">305 250,00</div>
<div class="t" style="left:641.3px;top:643.7624999999999px;width:80px;height:14px;line-height:14px;text-align:right;font-size:8.3px;font-weight:normal;color:#222;transform:scaleY(1.1);">4 300,00</div>
<div class="t" style="left:716.3px;top:643.7624999999999px;width:80px;height:14px;line-height:14px;text-align:right;font-size:8.3px;font-weight:normal;color:#222;transform:scaleY(1.1);">124 300,00</div>
<div class="t" style="left:790.3px;top:643.7624999999999px;width:80px;height:14px;line-height:14px;text-align:right;font-size:8.3px;font-weight:normal;color:#222;transform:scaleY(1.1);">1 707 250,00</div>
<div style="left:916px;top:182px;width:19px;height:468px;background:#e6e6e6;"></div>
<div style="left:916px;top:197.5px;width:17.5px;height:452.5px;background:#dadada;border-left:1px solid #b8b8b8;border-right:1px solid #c4c4c4;"></div>
<div style="left:918px;top:184px;width:14px;height:12.5px;background:#fff;border:1px solid #ababab;"></div>
<svg style="left:921px;top:187px" width="8" height="6"><path d="M0.5 5 L4 1.2 L7.5 5Z" fill="#555"/></svg>
<div style="left:918px;top:196px;width:14px;height:14px;background:#fff;border:1px solid #ababab;"></div>
<div style="left:919px;top:637px;width:12.5px;height:12.5px;background:#fff;border:1px solid #ababab;"></div>
<svg style="left:921.5px;top:641px" width="8" height="6"><path d="M0.5 1 L4 4.8 L7.5 1Z" fill="#555"/></svg>
<div style="left:0px;top:650px;width:935px;height:19px;background:#e6e6e6;border-top:1px solid #d0d0d0;"></div>
<svg style="left:18px;top:655px" width="6" height="9"><path d="M4.5 0.5 L0.5 4.5 L4.5 8.5Z" fill="#555"/></svg>
<svg style="left:38px;top:655px" width="6" height="9"><path d="M0.5 0.5 L4.5 4.5 L0.5 8.5Z" fill="#555"/></svg>
<div class="t" style="left:48.5px;top:651.0px;width:20px;height:14px;line-height:14px;text-align:center;font-size:9px;color:#555;">...</div>
<div style="left:69.5px;top:653px;width:1px;height:13px;background:#c6c6c6;"></div>
<div class="t" style="left:69.4px;top:650.8px;width:80px;height:14px;line-height:14px;text-align:center;font-size:10px;color:#505050;">BUD_MPK_C</div>
<div style="left:150.5px;top:653px;width:1px;height:13px;background:#c6c6c6;"></div>
<div class="t" style="left:141.0px;top:650.8px;width:80px;height:14px;line-height:14px;text-align:center;font-size:10px;letter-spacing:-0.4px;color:#505050;">SLS_QTY</div>
<div style="left:213px;top:651px;width:123px;height:15.5px;background:#4472c4;"></div>
<div class="t" style="left:214.0px;top:651.0px;width:120px;height:14px;line-height:14px;text-align:center;font-size:10px;color:#e8f0ff;">RPT_BUD_VERSIONS</div>
<div style="left:336px;top:650px;width:150px;height:17px;background:#fff;border-bottom:2px solid #217346;box-shadow:0 1px 2px rgba(0,0,0,0.15);"></div>
<div class="t" style="left:336.4px;top:651.0px;width:150px;height:14px;line-height:14px;text-align:center;font-size:10.2px;font-weight:bold;color:#217346;-webkit-text-stroke:0;">RPT_BUD_VERSIONS_ALL</div>
<div class="t" style="left:497px;top:651.0px;height:14px;line-height:14px;font-size:10px;color:#555;">PR</div>
<div class="t" style="left:515.5px;top:651.0px;height:14px;line-height:14px;font-size:10px;letter-spacing:0.6px;color:#555;">...</div>
<svg style="left:531px;top:651px" width="16" height="16"><circle cx="8" cy="8" r="6.3" fill="none" stroke="#666" stroke-width="1"/><path d="M8 4.5 V11.5 M4.5 8 H11.5" stroke="#666" stroke-width="1"/></svg>
<div style="left:558.8px;top:655px;width:1.2px;height:1.2px;background:#999;"></div>
<div style="left:558.8px;top:658.5px;width:1.2px;height:1.2px;background:#999;"></div>
<div style="left:558.8px;top:662px;width:1.2px;height:1.2px;background:#999;"></div>
<div style="left:570px;top:653px;width:346px;height:12.5px;background:#e6e6e6;"></div>
<div style="left:570px;top:653px;width:12.5px;height:12.5px;background:#fff;border:1px solid #ababab;"></div>
<svg style="left:573.5px;top:656px" width="6" height="8"><path d="M4.5 0.5 L1 3.5 L4.5 6.5Z" fill="#555"/></svg>
<div style="left:582px;top:653px;width:282px;height:12.5px;background:#fff;border:1px solid #ababab;"></div>
<div style="left:902.5px;top:653px;width:12.5px;height:12.5px;background:#fff;border:1px solid #ababab;"></div>
<svg style="left:906px;top:656px" width="6" height="8"><path d="M1 0.5 L4.5 3.5 L1 6.5Z" fill="#555"/></svg>
<div style="left:0px;top:669px;width:1280px;height:17.5px;background:#f3f3f3;"></div>
<div class="t" style="left:7px;top:670.8px;height:14px;line-height:14px;font-size:8.5px;color:#444;">Gotowy</div>
<svg style="left:64px;top:671px" width="13" height="13"><rect x="1" y="2" width="10" height="9" fill="none" stroke="#777" stroke-width="1"/><rect x="1" y="2" width="10" height="2.5" fill="#777"/><path d="M3 6.5 H4.5 M5.5 6.5 H7 M8 6.5 H9.5 M3 8.7 H4.5 M5.5 8.7 H7 M8 8.7 H9.5" stroke="#777" stroke-width="1"/></svg>
<svg style="left:90px;top:671px" width="16" height="14"><path d="M6 1.5 A5.5 5.5 0 1 0 11.5 7" fill="none" stroke="#666" stroke-width="1.1"/><path d="M8 6 L14 12 M14 6 L8 12" stroke="#444" stroke-width="1.3"/><path d="M6 4 V8 L9 9" fill="none" stroke="#666" stroke-width="1"/></svg>
<div class="t" style="left:106px;top:670.8px;height:14px;line-height:14px;font-size:8.7px;color:#444;">Ułatwienia dostępu: zbadaj</div>
<svg style="left:909px;top:671px" width="16" height="14"><rect x="1" y="1" width="12" height="9" fill="#555"/><circle cx="12" cy="11" r="2.5" fill="#777" stroke="#f3f3f3" stroke-width="1"/></svg>
<div class="t" style="left:924.7px;top:670.8px;height:14px;line-height:14px;font-size:8.47px;color:#444;">Ustawienia wyświetlania</div>
<div style="left:1032px;top:669px;width:33px;height:17.5px;background:#d4d4d4;"></div>
<svg style="left:1041px;top:672px" width="14" height="12"><rect x="1" y="0.5" width="12" height="10" fill="none" stroke="#888" stroke-width="1"/><path d="M1 3.8 H13 M1 7.2 H13 M5 0.5 V10.5 M9 0.5 V10.5" stroke="#888" stroke-width="0.9"/></svg>
<svg style="left:1074px;top:672px" width="14" height="12"><rect x="1" y="0.5" width="12" height="10.5" fill="none" stroke="#888" stroke-width="1"/><rect x="3.5" y="2.5" width="7" height="6.5" fill="none" stroke="#888" stroke-width="0.9"/></svg>
<svg style="left:1107px;top:672px" width="14" height="12"><path d="M1 0.5 V11 H13 V0.5" fill="none" stroke="#888" stroke-width="1"/><path d="M1 6.5 H7 V0.5" fill="none" stroke="#888" stroke-width="0.9"/></svg>
<div style="left:1136.5px;top:677.5px;width:6px;height:1px;background:#777;"></div>
<div style="left:1148px;top:677.5px;width:82px;height:1px;background:#888;"></div>
<div style="left:1182px;top:672.5px;width:4px;height:10px;background:#555;"></div>
<div style="left:1233.5px;top:677.5px;width:7px;height:1px;background:#777;"></div>
<div style="left:1236.5px;top:674.5px;width:1px;height:7px;background:#777;"></div>
<div class="t" style="left:1228.5px;top:671.6px;width:40px;height:14px;line-height:14px;text-align:right;font-size:8.8px;letter-spacing:-0.3px;color:#444;">90%</div>
<div style="left:0px;top:686.5px;width:1280px;height:6.5px;background:#0a0a0a;"></div>
<div style="left:250px;top:686.5px;width:40px;height:6.5px;background:#3a3a3a;"></div>
<div class="t" style="left:1190.0px;top:686.0px;width:40px;height:14px;line-height:14px;text-align:center;font-size:9px;color:#ddd;">15:22</div>
<div style="left:935px;top:182px;width:345px;height:487px;background:#e6e6e6;"></div>
<svg style="left:1222px;top:197px" width="10" height="7"><path d="M0.5 1 L9 1 L4.75 5.5Z" fill="#666"/></svg>
<svg style="left:1256px;top:195px" width="11" height="11"><path d="M1 1 L10 10 M10 1 L1 10" stroke="#666" stroke-width="1.2"/></svg>
<div style="left:938px;top:214.5px;width:336px;height:449.5px;background:#fff;"></div>
<svg style="left:944px;top:219px" width="28" height="28"><path d="M2.00 13.79 A12 12 0 0 1 22.18 5.22 L17.82 9.90 A5.6 5.6 0 0 0 8.40 13.90 Z" fill="#5b86b8"/><path d="M22.78 5.82 A12 12 0 0 1 6.78 23.58 L10.63 18.47 A5.6 5.6 0 0 0 18.10 10.18 Z" fill="#63ad8f"/><path d="M6.29 23.19 A12 12 0 0 1 2.01 14.42 L8.40 14.20 A5.6 5.6 0 0 0 10.40 18.29 Z" fill="#3f5a7a"/></svg>
<div class="t" style="left:991.5px;top:221.0px;height:24px;line-height:24px;font-size:18.5px;color:#333;">FlexiReporting</div>
<div class="t" style="left:1177.5px;top:227.5px;height:14px;line-height:14px;font-size:9.5px;font-style:italic;color:#555;">Polski</div>
<svg style="left:1228px;top:220px" width="22" height="22"><polygon points="8.00,10.50 9.09,10.64 9.51,12.08 10.14,12.56 11.64,12.60 12.06,13.61 11.02,14.70 10.92,15.48 11.64,16.80 10.97,17.67 9.51,17.32 8.78,17.62 8.00,18.90 6.91,18.76 6.49,17.32 5.86,16.84 4.36,16.80 3.94,15.79 4.98,14.70 5.08,13.92 4.36,12.60 5.03,11.73 6.49,12.08 7.22,11.78" fill="none" stroke="#6a6a6a" stroke-width="1.1" stroke-linejoin="round"/><circle cx="8" cy="14.7" r="1.3" fill="#6a6a6a"/><polygon points="14.50,4.60 15.64,4.75 16.08,6.26 16.74,6.76 18.31,6.80 18.75,7.86 17.67,9.00 17.56,9.82 18.31,11.20 17.61,12.11 16.08,11.74 15.32,12.06 14.50,13.40 13.36,13.25 12.92,11.74 12.26,11.24 10.69,11.20 10.25,10.14 11.33,9.00 11.44,8.18 10.69,6.80 11.39,5.89 12.92,6.26 13.68,5.94" fill="none" stroke="#5660b0" stroke-width="1.1" stroke-linejoin="round"/><circle cx="14.5" cy="9" r="1.3" fill="#5660b0"/></svg>
<svg style="left:1253.7px;top:225px" width="14" height="15">
<path d="M4.2 4.2 A4.6 4.6 0 1 0 9.8 4.2" fill="none" stroke="#c0282a" stroke-width="1.7"/>
<path d="M7 1.5 V7" stroke="#c0282a" stroke-width="1.7"/>
</svg>
<svg style="left:944px;top:254.5px" width="12" height="13">
<circle cx="5.5" cy="3.5" r="2.9" fill="#46578a"/>
<path d="M0.8 11.5 Q0.8 6.8 5.5 6.8 Q10.2 6.8 10.2 11.5 Z" fill="#46578a"/>
</svg>
<div class="t" style="left:964px;top:254.2px;height:14px;line-height:14px;font-size:9.9px;color:#262626;-webkit-text-stroke:0.4px #262626;">Zalogowany jako: Administrator</div>
<div style="left:941px;top:271px;width:50px;height:17px;background:#fff;border:1px solid #d4d4d4;border-bottom:none;"></div>
<div class="t" style="left:941.0px;top:272.5px;width:50px;height:14px;line-height:14px;text-align:center;font-size:9.2px;color:#222;">Nawigacja</div>
<div style="left:991px;top:273px;width:49px;height:14px;background:#f0f0f0;border:1px solid #dcdcdc;border-left:none;"></div>
<div class="t" style="left:988.0px;top:273.5px;width:55px;height:14px;line-height:14px;text-align:center;font-size:9.1px;color:#222;">Obliczenia</div>
<div style="left:1040px;top:273px;width:67.5px;height:14px;background:#f0f0f0;border:1px solid #dcdcdc;border-left:none;"></div>
<div class="t" style="left:1037.0px;top:273.5px;width:73.5px;height:14px;line-height:14px;text-align:center;font-size:9.1px;color:#222;">Źródła danych</div>
<div style="left:1107.5px;top:273px;width:55.0px;height:14px;background:#f0f0f0;border:1px solid #dcdcdc;border-left:none;"></div>
<div class="t" style="left:1104.5px;top:273.5px;width:61.0px;height:14px;line-height:14px;text-align:center;font-size:9.1px;color:#222;">Mapowania</div>
<div style="left:1162.5px;top:273px;width:35.5px;height:14px;background:#f0f0f0;border:1px solid #dcdcdc;border-left:none;"></div>
<div class="t" style="left:1159.5px;top:273.5px;width:41.5px;height:14px;line-height:14px;text-align:center;font-size:9.1px;color:#222;">Proces</div>
<div style="left:944px;top:291.5px;width:325px;height:136px;display:none"></div>
<div style="left:944px;top:290.8px;width:325px;height:337px;background:#fff;border:1px solid #7a7a7a;"></div>
<div style="left:1255px;top:292.5px;width:13px;height:334px;background:#f0f0f0;"></div>
<svg style="left:1257px;top:296px" width="10" height="7"><path d="M1 5.5 L5 1.5 L9 5.5" fill="none" stroke="#888" stroke-width="1"/></svg>
<div style="left:1255.5px;top:306px;width:12px;height:173px;background:#cdcdcd;"></div>
<svg style="left:1257px;top:616.5px" width="10" height="7"><path d="M1.5 1.5 L5 5 L8.5 1.5" fill="none" stroke="#444" stroke-width="1.1"/></svg>
<svg style="left:946px;top:294.905px" width="12" height="11"><rect x="0.5" y="8" width="1.6" height="2" fill="#444"/><rect x="3" y="6.5" width="1.6" height="3.5" fill="#444"/><rect x="5.5" y="4.5" width="1.6" height="5.5" fill="#444"/><rect x="8" y="2" width="1.6" height="8" fill="#444"/></svg>
<div class="t" style="left:971.2px;top:294.205px;height:14px;line-height:14px;font-size:9.37px;font-weight:bold;color:#222;-webkit-text-stroke:0;">A. Budżetowanie i prognozowanie kosztów</div>
<svg style="left:1237px;top:296.905px" width="12" height="8"><path d="M1 6.5 L6 1.7 L11 6.5" fill="none" stroke="#111" stroke-width="1.8"/></svg>
<svg style="left:952.5px;top:309.91499999999996px" width="14" height="14"><path d="M7 0.8 L8.9 5 L13.4 5.3 L9.9 8.3 L11 12.8 L7 10.3 L3 12.8 L4.1 8.3 L0.6 5.3 L5.1 5Z" fill="#b5b5b5"/></svg>
<div class="t" style="left:978.8px;top:310.215px;height:14px;line-height:14px;font-size:9.3px;font-weight:bold;color:#222;-webkit-text-stroke:0;">A01. Budżety kosztów MPK</div>
<svg style="left:1237px;top:312.91499999999996px" width="12" height="8"><path d="M1 6.5 L6 1.7 L11 6.5" fill="none" stroke="#111" stroke-width="1.8"/></svg>
<div style="left:945px;top:324.91999999999996px;width:307px;height:16.01px;background:#f5f5f5;"></div>
<svg style="left:956px;top:326.92499999999995px" width="12" height="12"><circle cx="5" cy="5" r="3.7" fill="none" stroke="#3f4855" stroke-width="1.5"/><path d="M7.7 7.7 L11 11" stroke="#3f4855" stroke-width="1.7"/></svg>
<div class="t" style="left:995px;top:326.22499999999997px;height:14px;line-height:14px;font-size:9.16px;color:#444;">Budżet kosztów - planowanie MPK</div>
<svg style="left:956px;top:342.93499999999995px" width="12" height="12"><circle cx="5" cy="5" r="3.7" fill="none" stroke="#3f4855" stroke-width="1.5"/><path d="M7.7 7.7 L11 11" stroke="#3f4855" stroke-width="1.7"/></svg>
<div class="t" style="left:995px;top:342.23499999999996px;height:14px;line-height:14px;font-size:9.16px;color:#444;">Budżet kosztów - planowanie szczegółowe</div>
<svg style="left:949.5px;top:359.945px" width="12" height="10"><rect x="0.5" y="0.5" width="11" height="8.5" fill="#e8e8e8" stroke="#888" stroke-width="1"/><rect x="0.5" y="0.5" width="11" height="2" fill="#888"/><rect x="3" y="4" width="6" height="3" fill="#bbb"/></svg>
<div class="t" style="left:978.8px;top:358.245px;height:14px;line-height:14px;font-size:9.3px;font-weight:bold;color:#222;-webkit-text-stroke:0;">A02. Budżety centralne i nośniki kosztów</div>
<svg style="left:1237px;top:360.945px" width="12" height="8"><path d="M1 6.5 L6 1.7 L11 6.5" fill="none" stroke="#111" stroke-width="1.8"/></svg>
<div style="left:945px;top:372.95px;width:307px;height:16.01px;background:#f5f5f5;"></div>
<svg style="left:956px;top:374.955px" width="12" height="12"><circle cx="5" cy="5" r="3.7" fill="none" stroke="#3f4855" stroke-width="1.5"/><path d="M7.7 7.7 L11 11" stroke="#3f4855" stroke-width="1.7"/></svg>
<div class="t" style="left:995px;top:374.255px;height:14px;line-height:14px;font-size:9.16px;color:#444;">Budżet kosztów centralnych - usługi IT</div>
<svg style="left:956px;top:390.965px" width="12" height="12"><circle cx="5" cy="5" r="3.7" fill="none" stroke="#3f4855" stroke-width="1.5"/><path d="M7.7 7.7 L11 11" stroke="#3f4855" stroke-width="1.7"/></svg>
<div class="t" style="left:995px;top:390.265px;height:14px;line-height:14px;font-size:9.16px;color:#444;">Nośniki kosztów - planowane zużycie mediów</div>
<div style="left:945px;top:404.96999999999997px;width:307px;height:16.01px;background:#f5f5f5;"></div>
<svg style="left:956px;top:406.97499999999997px" width="12" height="12"><circle cx="5" cy="5" r="3.7" fill="none" stroke="#3f4855" stroke-width="1.5"/><path d="M7.7 7.7 L11 11" stroke="#3f4855" stroke-width="1.7"/></svg>
<div class="t" style="left:995px;top:406.275px;height:14px;line-height:14px;font-size:9.16px;color:#444;">Nośniki kosztów - stawki jednostkowe mediów</div>
<svg style="left:949.5px;top:423.985px" width="12" height="10"><rect x="0.5" y="0.5" width="11" height="8.5" fill="#e8e8e8" stroke="#888" stroke-width="1"/><rect x="0.5" y="0.5" width="11" height="2" fill="#888"/><rect x="3" y="4" width="6" height="3" fill="#bbb"/></svg>
<div class="t" style="left:978.8px;top:422.285px;height:14px;line-height:14px;font-size:9.3px;font-weight:bold;color:#222;-webkit-text-stroke:0;">A03. Raporty budżetowe</div>
<svg style="left:1237px;top:424.985px" width="12" height="8"><path d="M1 6.5 L6 1.7 L11 6.5" fill="none" stroke="#111" stroke-width="1.8"/></svg>
<div style="left:945px;top:436.99px;width:307px;height:16.01px;background:#f5f5f5;"></div>
<svg style="left:956px;top:438.995px" width="12" height="12"><circle cx="5" cy="5" r="3.7" fill="none" stroke="#3f4855" stroke-width="1.5"/><path d="M7.7 7.7 L11 11" stroke="#3f4855" stroke-width="1.7"/></svg>
<div class="t" style="left:995px;top:438.295px;height:14px;line-height:14px;font-size:9.16px;color:#444;">Rachunek zysków i strat</div>
<svg style="left:956px;top:455.005px" width="12" height="12"><circle cx="5" cy="5" r="3.7" fill="none" stroke="#3f4855" stroke-width="1.5"/><path d="M7.7 7.7 L11 11" stroke="#3f4855" stroke-width="1.7"/></svg>
<div class="t" style="left:995px;top:454.305px;height:14px;line-height:14px;font-size:9.16px;color:#444;">Porównanie dwóch wersji danych - koszty</div>
<div style="left:945px;top:469.01px;width:307px;height:16.01px;background:#f5f5f5;"></div>
<svg style="left:956px;top:471.015px" width="12" height="12"><circle cx="5" cy="5" r="3.7" fill="none" stroke="#3f4855" stroke-width="1.5"/><path d="M7.7 7.7 L11 11" stroke="#3f4855" stroke-width="1.7"/></svg>
<div class="t" style="left:995px;top:470.315px;height:14px;line-height:14px;font-size:9.16px;color:#444;">Zestawienie wersji budżetu</div>
<svg style="left:956px;top:487.025px" width="12" height="12"><circle cx="5" cy="5" r="3.7" fill="none" stroke="#3f4855" stroke-width="1.5"/><path d="M7.7 7.7 L11 11" stroke="#3f4855" stroke-width="1.7"/></svg>
<div class="t" style="left:995px;top:486.325px;height:14px;line-height:14px;font-size:9.16px;color:#444;">Zestawienie wersji budżetu (wg MPK)</div>
<svg style="left:946px;top:503.03499999999997px" width="12" height="11"><rect x="0.5" y="8" width="1.6" height="2" fill="#444"/><rect x="3" y="6.5" width="1.6" height="3.5" fill="#444"/><rect x="5.5" y="4.5" width="1.6" height="5.5" fill="#444"/><rect x="8" y="2" width="1.6" height="8" fill="#444"/></svg>
<div class="t" style="left:971.2px;top:502.335px;height:14px;line-height:14px;font-size:9.37px;font-weight:bold;color:#222;-webkit-text-stroke:0;">B. Budżetowanie i prognozowanie sprzedaży</div>
<svg style="left:1237px;top:505.03499999999997px" width="12" height="8"><path d="M1 6.5 L6 1.7 L11 6.5" fill="none" stroke="#111" stroke-width="1.8"/></svg>
<svg style="left:949.5px;top:520.045px" width="12" height="10"><rect x="0.5" y="0.5" width="11" height="8.5" fill="#e8e8e8" stroke="#888" stroke-width="1"/><rect x="0.5" y="0.5" width="11" height="2" fill="#888"/><rect x="3" y="4" width="6" height="3" fill="#bbb"/></svg>
<div class="t" style="left:978.8px;top:518.3449999999999px;height:14px;line-height:14px;font-size:9.3px;font-weight:bold;color:#222;-webkit-text-stroke:0;">B01. Formatki handlowców</div>
<svg style="left:1237px;top:521.045px" width="12" height="8"><path d="M1 6.5 L6 1.7 L11 6.5" fill="none" stroke="#111" stroke-width="1.8"/></svg>
<div style="left:945px;top:533.05px;width:307px;height:16.01px;background:#f5f5f5;"></div>
<svg style="left:956px;top:535.055px" width="12" height="12"><circle cx="5" cy="5" r="3.7" fill="none" stroke="#3f4855" stroke-width="1.5"/><path d="M7.7 7.7 L11 11" stroke="#3f4855" stroke-width="1.7"/></svg>
<div class="t" style="left:995px;top:534.3549999999999px;height:14px;line-height:14px;font-size:9.16px;color:#444;">Ilościowy plan sprzedaży</div>
<svg style="left:956px;top:551.0649999999999px" width="12" height="12"><circle cx="5" cy="5" r="3.7" fill="none" stroke="#3f4855" stroke-width="1.5"/><path d="M7.7 7.7 L11 11" stroke="#3f4855" stroke-width="1.7"/></svg>
<div class="t" style="left:995px;top:550.3649999999999px;height:14px;line-height:14px;font-size:9.16px;color:#444;">Raport marżowości</div>
<svg style="left:949.5px;top:568.0749999999999px" width="12" height="10"><rect x="0.5" y="0.5" width="11" height="8.5" fill="#e8e8e8" stroke="#888" stroke-width="1"/><rect x="0.5" y="0.5" width="11" height="2" fill="#888"/><rect x="3" y="4" width="6" height="3" fill="#bbb"/></svg>
<div class="t" style="left:978.8px;top:566.3749999999999px;height:14px;line-height:14px;font-size:9.3px;font-weight:bold;color:#222;-webkit-text-stroke:0;">B02. Formatki controllingu</div>
<svg style="left:1237px;top:569.0749999999999px" width="12" height="8"><path d="M1 6.5 L6 1.7 L11 6.5" fill="none" stroke="#111" stroke-width="1.8"/></svg>
<div style="left:945px;top:581.0799999999999px;width:307px;height:16.01px;background:#f5f5f5;"></div>
<svg style="left:956px;top:583.0849999999999px" width="12" height="12"><circle cx="5" cy="5" r="3.7" fill="none" stroke="#3f4855" stroke-width="1.5"/><path d="M7.7 7.7 L11 11" stroke="#3f4855" stroke-width="1.7"/></svg>
<div class="t" style="left:995px;top:582.3849999999999px;height:14px;line-height:14px;font-size:9.16px;color:#444;">Ceny zakupu</div>
<svg style="left:956px;top:599.095px" width="12" height="12"><circle cx="5" cy="5" r="3.7" fill="none" stroke="#3f4855" stroke-width="1.5"/><path d="M7.7 7.7 L11 11" stroke="#3f4855" stroke-width="1.7"/></svg>
<div class="t" style="left:995px;top:598.395px;height:14px;line-height:14px;font-size:9.16px;color:#444;">Cenniki produktów</div>
<div style="left:945px;top:613.1px;width:307px;height:13.899999999999977px;background:#f5f5f5;"></div>
<svg style="left:956px;top:615.105px" width="12" height="12"><circle cx="5" cy="5" r="3.7" fill="none" stroke="#3f4855" stroke-width="1.5"/><path d="M7.7 7.7 L11 11" stroke="#3f4855" stroke-width="1.7"/></svg>
<div class="t" style="left:995px;top:614.405px;height:14px;line-height:14px;font-size:9.16px;color:#444;">Koszty dostawy</div>
<div style="left:944px;top:290.8px;width:325px;height:337px;border:1px solid #7a7a7a;"></div>
<div style="left:938px;top:631.5px;width:336px;height:1px;background:#ececec;"></div>
<svg style="left:1071px;top:642px" width="15" height="14">
<path d="M13 1 L3.5 7 L13 13 L9.5 7 Z" fill="#2a63b5"/>
<path d="M3.5 7 L9.5 7 L13 13Z" fill="#1c3f7a"/>
</svg>
<div class="t" style="left:1085.5px;top:641.8px;height:14px;line-height:14px;font-size:9px;letter-spacing:-0.45px;font-weight:bold;color:#2a2a2a;-webkit-text-stroke:0;">FlexiSolutions</div>
<div class="t" style="left:1206.5px;top:643.0px;width:60px;height:14px;line-height:14px;text-align:right;font-size:8.6px;letter-spacing:-0.1px;color:#555;">1.5.15.23</div>
</body></html>
